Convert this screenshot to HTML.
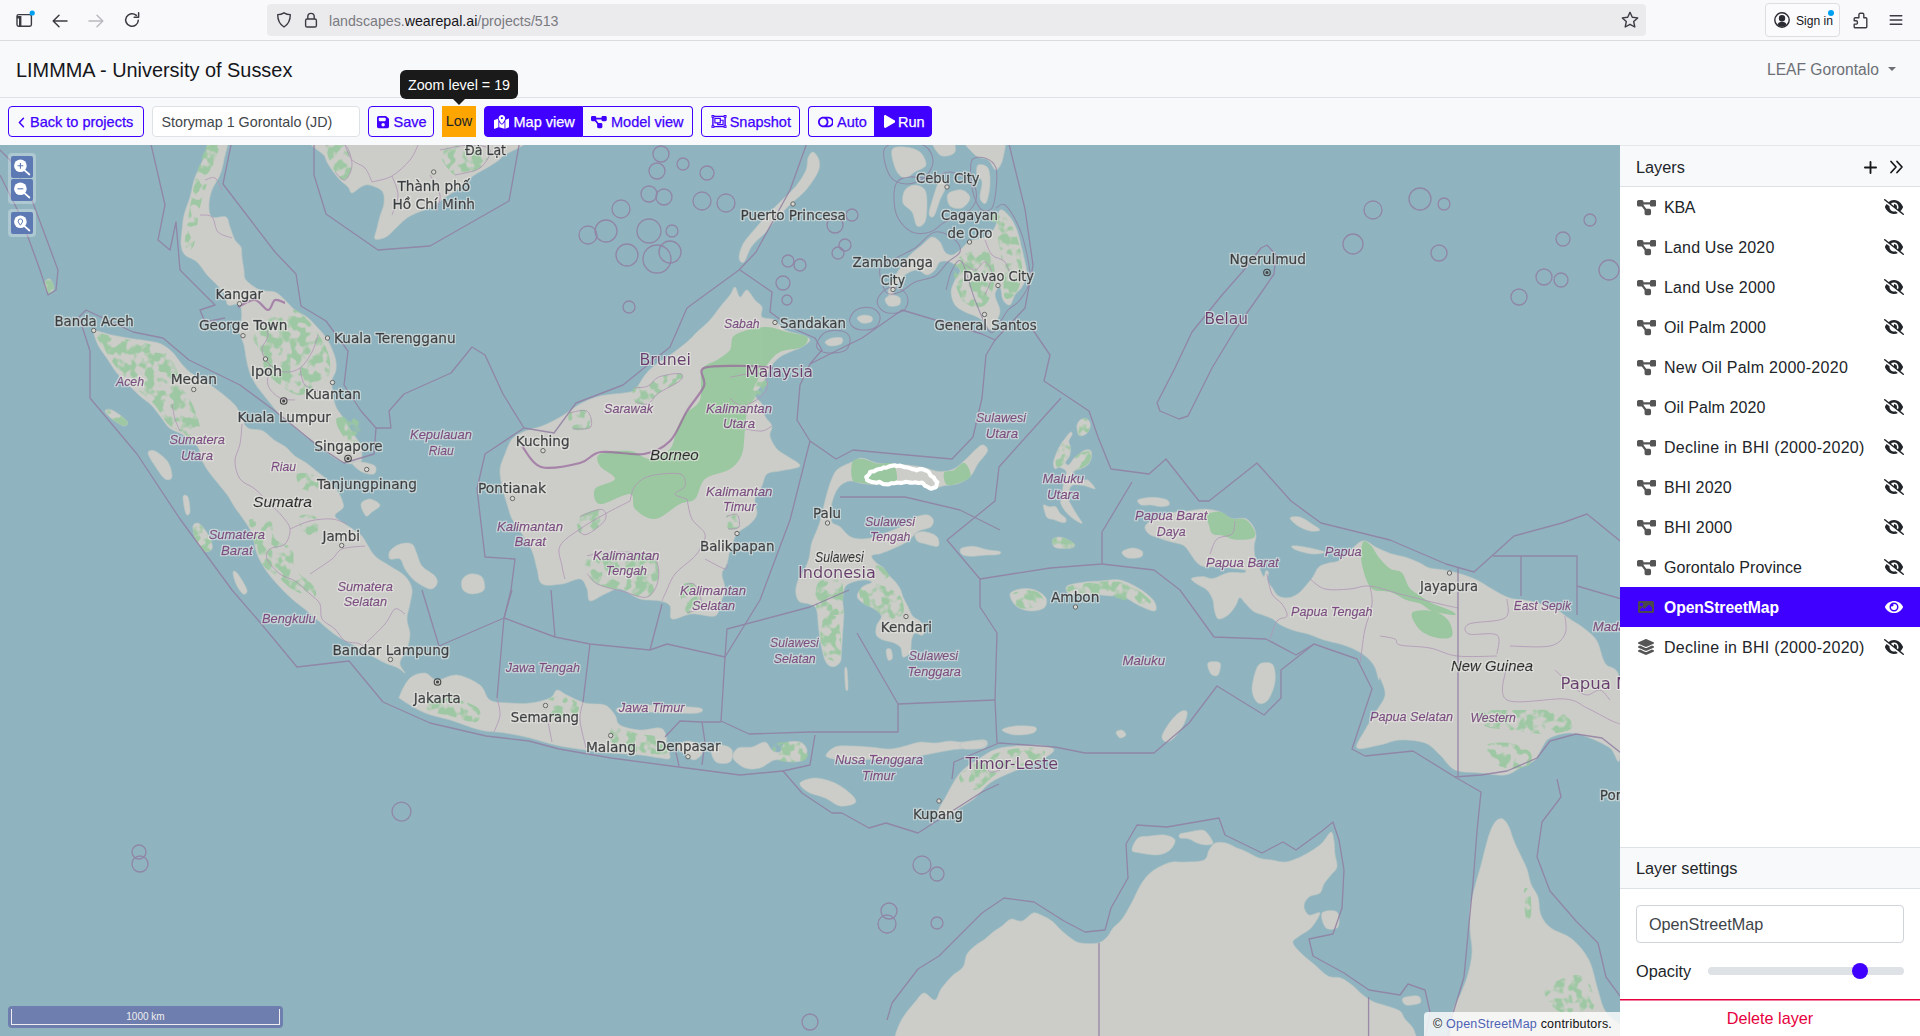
<!DOCTYPE html>
<html lang="en">
<head>
<meta charset="utf-8">
<title>LIMMMA - University of Sussex</title>
<style>
*{box-sizing:border-box}
html,body{margin:0;padding:0}
body{width:1920px;height:1036px;overflow:hidden;background:#f8f9fa;font-family:"Liberation Sans",sans-serif;color:#212529;position:relative}
.abs{position:absolute}
/* browser chrome */
#chrome{position:absolute;left:0;top:0;width:1920px;height:41px;background:#f9f9fb;border-bottom:1px solid #dcdce0}
#urlbar{position:absolute;left:267px;top:4px;width:1379px;height:32px;border-radius:4px;background:#ebebee}
#url{position:absolute;left:62px;top:9px;font-size:14.2px;line-height:17px;color:#7a7a80;white-space:nowrap}
#url b{font-weight:400;color:#15141a}
#signin{position:absolute;left:1765px;top:3px;width:75px;height:34px;border:1px solid #dedee2;border-radius:4px;background:#fbfbfd}
#signin span{position:absolute;left:30px;top:9px;font-size:12.1px;line-height:16px;color:#15141a;white-space:nowrap}
/* app header */
#hdr{position:absolute;left:0;top:41px;width:1920px;height:57px;background:#f8f9fa;border-bottom:1px solid #dee2e6}
#title{position:absolute;left:16px;top:17px;font-size:19.9px;line-height:24px;color:#15161a;white-space:nowrap}
#team{position:absolute;left:1767px;top:19px;font-size:15.6px;line-height:20px;color:#6c7076;white-space:nowrap}
#caret{position:absolute;left:1888px;top:25.5px;width:0;height:0;border-left:4px solid transparent;border-right:4px solid transparent;border-top:4.5px solid #6c7076}
/* toolbar */
.btn{position:absolute;top:106px;height:31px;border:1px solid #4000ff;border-radius:4px;background:#f8f9fa;color:#4000ff;font-size:14.5px;line-height:29px;white-space:nowrap}
.btn.fill{background:#4000ff;color:#fff}
.btn span{position:absolute;top:0.8px;-webkit-text-stroke:0.25px currentColor}
#pname{position:absolute;left:152px;top:106px;width:208px;height:31px;border:1px solid #dee2e6;border-radius:4px;background:#fff;font-size:14.3px;line-height:29px;padding-left:8.5px;padding-top:0.8px;color:#41464b;white-space:nowrap}
#low{position:absolute;left:442px;top:106px;width:34px;height:31px;background:#ffa500;color:#212529;font-size:14.5px;line-height:30px;text-align:center}
#tip{position:absolute;left:400px;top:70px;width:118px;height:29px;border-radius:6px;background:#1a1a1a;color:#fff;font-size:14.3px;line-height:31px;text-align:center;white-space:nowrap}
#tiparrow{position:absolute;left:453px;top:99px;width:0;height:0;border-left:6px solid transparent;border-right:6px solid transparent;border-top:6px solid #1a1a1a}
/* map */
#map{position:absolute;left:0;top:145px;width:1620px;height:891px;overflow:hidden;background:#8fb4bf}
#map svg{position:absolute;left:0;top:0}
.ctl{position:absolute;left:8px;width:28px;border-radius:4px;background:rgba(255,255,255,.27);padding:3px}
.ctl i{display:block;width:22px;height:22px;background:#5d79b3;border-radius:2px;margin-bottom:1px;position:relative}
#scale{position:absolute;left:8px;top:861px;width:275px;height:22px;border-radius:4px;background:#6e7eae;padding:3px}
#scale div{width:269px;height:16px;border:1px solid #eee;border-top:none;color:#eee;font-size:10px;line-height:15px;text-align:center}
#attr{position:absolute;left:1424px;top:867px;width:196px;height:24px;border-top-left-radius:4px;background:rgba(255,255,255,.8);font-size:12.5px;letter-spacing:0.2px;line-height:25px;padding-left:9px;color:#111;white-space:nowrap}
#attr a{color:#4d62b5;text-decoration:none}
/* sidebar */
#side{position:absolute;left:1620px;top:145px;width:300px;height:891px;background:#fff}
#lh{position:absolute;left:0;top:0;width:300px;height:42px;background:#f8f9fa;border-bottom:1px solid #dee2e6;border-top:1px solid #e4e7ea}
#sh span{top:10px !important}
#lh span,#sh span{position:absolute;left:16px;top:11px;font-size:16.3px;line-height:20px;color:#212529}
.row{position:absolute;left:0;width:300px;height:40px;font-size:16px;line-height:40px;color:#212529;white-space:nowrap}
.row span{position:absolute;left:44px;top:1px;letter-spacing:0.27px}
.row.sel{background:#4000ff;color:#fff;font-weight:700}
.row.sel span{font-size:15.7px}
.row svg{position:absolute}
#sh{position:absolute;left:0;top:702px;width:300px;height:42px;background:#f8f9fa;border-top:1px solid #dee2e6;border-bottom:1px solid #dee2e6}
#lname{position:absolute;left:16px;top:760px;width:268px;height:38px;border:1px solid #ced4da;border-radius:4px;font-size:16.2px;line-height:36px;padding-left:12px;color:#3d4349}
#oplabel{position:absolute;left:16px;top:816px;font-size:16.3px;line-height:20px}
#track{position:absolute;left:88px;top:822px;width:196px;height:8px;border-radius:4px;background:#dee2e6}
#thumb{position:absolute;left:232px;top:818px;width:16px;height:16px;border-radius:8px;background:#4000ff}
#del{position:absolute;left:0;top:853.600px;width:300px;height:37.400px;box-shadow:inset 0 1.6px 0 #e6003c;color:#e6003c;font-size:16.2px;line-height:39.500px;text-align:center}
</style>
</head>
<body>

<div id="chrome">
<svg class="abs" style="left:14px;top:8px" width="24" height="24" viewBox="0 0 24 24" fill="none" stroke="#3b3b43" stroke-width="1.4"><rect x="3" y="6.6" width="14.4" height="11.6" rx="1.6"/><path d="M3 9.2h3.2v9" stroke-width="2.4" /><circle cx="18.2" cy="5" r="2.6" fill="#00a0f0" stroke="none"/></svg>
<svg class="abs" style="left:50px;top:11px" width="20" height="20" viewBox="0 0 20 20" fill="none" stroke="#3b3b43" stroke-width="1.5" stroke-linecap="round" stroke-linejoin="round"><path d="M17 10H3.5M9 4.2 3.2 10 9 15.8"/></svg>
<svg class="abs" style="left:86px;top:11px" width="20" height="20" viewBox="0 0 20 20" fill="none" stroke="#b9b9bf" stroke-width="1.5" stroke-linecap="round" stroke-linejoin="round"><path d="M3 10h13.5M11 4.2l5.800 5.800L11 15.800"/></svg>
<svg class="abs" style="left:122px;top:10px" width="20" height="20" viewBox="0 0 20 20" fill="none" stroke="#3b3b43" stroke-width="1.5" stroke-linecap="round" stroke-linejoin="round"><path d="M16.3 10.3a6.300 6.300 0 1 1-2-4.900"/><path d="M16.600 2.800v4.400h-4.400" /></svg>
<div id="urlbar">
<svg class="abs" style="left:8px;top:7px" width="18" height="18" viewBox="0 0 18 18" fill="none" stroke="#3b3b43" stroke-width="1.4" stroke-linejoin="round"><path d="M9 1.800c2 1.300 4.200 1.800 6.300 1.800 0 5.400-1.500 9.600-6.300 12.400C4.200 13.200 2.700 9 2.700 3.600c2.100 0 4.300-.5 6.300-1.800z"/></svg>
<svg class="abs" style="left:35px;top:7px" width="18" height="18" viewBox="0 0 18 18" fill="none" stroke="#3b3b43" stroke-width="1.4"><rect x="3.600" y="8" width="10.800" height="8" rx="1.600"/><path d="M5.800 8V5.600a3.200 3.200 0 0 1 6.400 0V8"/></svg>
<div id="url">landscapes.<b>wearepal.ai</b>/projects/513</div>
<svg class="abs" style="left:1353px;top:6px" width="20" height="20" viewBox="0 0 20 20" fill="none" stroke="#3b3b43" stroke-width="1.4" stroke-linejoin="round"><path d="M10 2.300l2.300 5 5.400.6-4 3.700 1.100 5.400L10 14.300 5.200 17l1.100-5.400-4-3.700 5.400-.6z"/></svg>
</div>
<div id="signin"><svg class="abs" style="left:7px;top:7px" width="18" height="18" viewBox="0 0 18 18" fill="none" stroke="#2b2b33" stroke-width="1.400"><circle cx="9" cy="9" r="7.200"/><circle cx="9" cy="7.200" r="2.500" fill="#2b2b33"/><path d="M4.300 13.600c1-2.200 2.700-2.900 4.700-2.900s3.700.7 4.700 2.900c-1.300 1.500-3 2.200-4.700 2.200s-3.400-.7-4.700-2.200z" fill="#2b2b33" stroke="none"/></svg><span>Sign in</span><svg class="abs" style="left:61px;top:5px" width="8" height="8"><circle cx="4" cy="4" r="3" fill="#00a0f0"/></svg></div>
<svg class="abs" style="left:1850px;top:9px" width="22" height="22" viewBox="0 0 22 22" fill="none" stroke="#3b3b43" stroke-width="1.400" stroke-linejoin="round"><path d="M5.2 8.700h3.700V5.600a1.300 1.300 0 0 1 1.300-1.300h2.300a1.300 1.300 0 0 1 1.300 1.300v3.100h2a1 1 0 0 1 1 1v8a1 1 0 0 1-1 1H5.200a1 1 0 0 1-1-1v-2.600h2a1.200 1.200 0 0 0 1.200-1.200v-1a1.200 1.200 0 0 0-1.200-1.200h-2V9.700a1 1 0 0 1 1-1z"/></svg>
<svg class="abs" style="left:1887px;top:12px" width="18" height="16" viewBox="0 0 18 16" fill="none" stroke="#3b3b43" stroke-width="1.400" stroke-linecap="round"><path d="M3.200 3.800h11.600M3.200 8h11.600M3.200 12.200h11.600"/></svg>
</div>
<div id="hdr"><div id="title">LIMMMA - University of Sussex</div><div id="team">LEAF Gorontalo</div><div id="caret"></div></div>
<div class="btn" style="left:8px;width:136px"><svg class="abs" style="left:9px;top:9.5px" width="7" height="11" viewBox="0 0 8 13" fill="none" stroke="#4000ff" stroke-width="1.800" stroke-linecap="round" stroke-linejoin="round"><path d="M6.300 1.500 1.500 6.500l4.800 5"/></svg><span style="left:21px">Back to projects</span></div>
<div id="pname">Storymap 1 Gorontalo (JD)</div>
<div class="btn" style="left:368px;width:66px"><svg class="abs" style="left:8px;top:7.5px" width="12.25" height="14" viewBox="0 0 448 512" fill="#4000ff" ><path d="M64 32C28.7 32 0 60.7 0 96L0 416c0 35.3 28.7 64 64 64l320 0c35.3 0 64-28.7 64-64l0-242.7c0-17-6.7-33.3-18.7-45.3L352 50.7C340 38.7 323.7 32 306.7 32L64 32zm0 96c0-17.7 14.3-32 32-32l192 0c17.7 0 32 14.3 32 32l0 64c0 17.7-14.3 32-32 32L96 224c-17.7 0-32-14.3-32-32l0-64zM224 288a64 64 0 1 1 0 128 64 64 0 1 1 0-128z"></path></svg><span style="left:24.500px">Save</span></div>
<div id="low">Low</div>
<div id="tip">Zoom level = 19</div><div id="tiparrow"></div>
<div class="btn fill" style="left:484px;width:99px;border-radius:4px 0 0 4px"><svg class="abs" style="left:8.5px;top:7.5px" width="15.75" height="14" viewBox="0 0 576 512" fill="#fff" ><path d="M408 120c0 54.6-73.1 151.9-105.2 192c-7.7 9.6-22 9.6-29.6 0C241.1 271.9 168 174.6 168 120C168 53.7 221.7 0 288 0s120 53.7 120 120zm8 80.4c3.5-6.9 6.7-13.8 9.6-20.6c.5-1.2 1-2.5 1.5-3.7l116-46.4C558.9 123.4 576 135 576 152l0 270.8c0 9.8-6 18.6-15.1 22.3L416 503l0-302.6zM137.6 138.3c2.4 14.1 7.2 28.3 12.8 41.5c2.9 6.8 6.1 13.7 9.6 20.6l0 251.4L32.9 502.7C17.1 509 0 497.4 0 480.4L0 209.6c0-9.8 6-18.6 15.1-22.3l122.6-49zM327.8 332c13.9-17.4 35.7-45.7 56.2-77l0 249.3L192 449.4 192 255c20.5 31.3 42.3 59.6 56.2 77c20.5 25.6 59.1 25.6 79.6 0zM288 152a40 40 0 1 0 0-80 40 40 0 1 0 0 80z"></path></svg><span style="left:28.500px">Map view</span></div>
<div class="btn" style="left:583px;width:110px;border-radius:0 4px 4px 0;border-left:none"><svg class="abs" style="left:8px;top:7.5px" width="15.75" height="14" viewBox="0 0 576 512" fill="#4000ff" ><path d="M0 80C0 53.5 21.5 32 48 32l96 0c26.5 0 48 21.5 48 48l0 16 192 0 0-16c0-26.5 21.5-48 48-48l96 0c26.5 0 48 21.5 48 48l0 96c0 26.5-21.5 48-48 48l-96 0c-26.5 0-48-21.5-48-48l0-16-192 0 0 16c0 1.7-.1 3.4-.3 5L272 288l96 0c26.5 0 48 21.5 48 48l0 96c0 26.5-21.5 48-48 48l-96 0c-26.5 0-48-21.5-48-48l0-96c0-1.7 .1-3.4 .3-5L144 224l-96 0c-26.5 0-48-21.5-48-48L0 80z"></path></svg><span style="left:28px">Model view</span></div>
<div class="btn" style="left:701px;width:99px"><svg class="abs" style="left:8.5px;top:7px" width="16.00" height="15" viewBox="0 0 512 512" fill="#4000ff" ><path d="M500 128c6.627 0 12-5.373 12-12V44c0-6.627-5.373-12-12-12h-72c-6.627 0-12 5.373-12 12v12H96V44c0-6.627-5.373-12-12-12H12C5.373 32 0 37.373 0 44v72c0 6.627 5.373 12 12 12h12v256H12c-6.627 0-12 5.373-12 12v72c0 6.627 5.373 12 12 12h72c6.627 0 12-5.373 12-12v-12h320v12c0 6.627 5.373 12 12 12h72c6.627 0 12-5.373 12-12v-72c0-6.627-5.373-12-12-12h-12V128h12zm-52-64h32v32h-32V64zM32 64h32v32H32V64zm32 384H32v-32h32v32zm416 0h-32v-32h32v32zm-40-64h-12c-6.627 0-12 5.373-12 12v12H96v-12c0-6.627-5.373-12-12-12H72V128h12c6.627 0 12-5.373 12-12v-12h320v12c0 6.627 5.373 12 12 12h12v256zm-36-192h-84v-52c0-6.628-5.373-12-12-12H108c-6.627 0-12 5.372-12 12v168c0 6.628 5.373 12 12 12h84v52c0 6.628 5.373 12 12 12h200c6.627 0 12-5.372 12-12V204c0-6.628-5.373-12-12-12zm-268-24h144v112H136V168zm240 176H232v-24h76c6.627 0 12-5.372 12-12v-76h56v112z"></path></svg><span style="left:27.700px">Snapshot</span></div>
<div class="btn" style="left:808px;width:67px;border-radius:4px 0 0 4px;border-right:none"><svg class="abs" style="left:8.5px;top:7.5px" width="15.75" height="14" viewBox="0 0 576 512" fill="#4000ff" ><path d="M384 64H192C85.961 64 0 149.961 0 256s85.961 192 192 192h192c106.039 0 192-85.961 192-192S490.039 64 384 64zM64 256c0-70.741 57.249-128 128-128 70.741 0 128 57.249 128 128 0 70.741-57.249 128-128 128-70.741 0-128-57.249-128-128zm320 128h-48.905c65.217-72.858 65.236-183.12 0-256H384c70.741 0 128 57.249 128 128 0 70.74-57.249 128-128 128z"></path></svg><span style="left:28px">Auto</span></div>
<div class="btn fill" style="left:874px;width:58px;border-radius:0 4px 4px 0"><svg class="abs" style="left:8.5px;top:8px" width="11.38" height="13" viewBox="0 0 448 512" fill="#fff" ><path d="M424.4 214.7L72.4 6.6C43.8-10.3 0 6.1 0 47.9V464c0 37.5 40.7 60.1 72.4 41.3l352-208c31.4-18.5 31.5-64.1 0-82.6z"></path></svg><span style="left:23px">Run</span></div>
<div id="map">
<svg width="1620" height="891" viewBox="0 145 1620 891">
<rect x="0" y="145" width="1620" height="891" fill="#8fb4bf"/>
<g fill="#cccdc8" stroke="#b7c4c2" stroke-width="0.6">
<path d="M210.0 135.0C206.3 137.8 207.7 146.8 206.0 152.0C204.3 157.2 202.0 161.3 200.0 166.0C198.0 170.7 195.7 174.8 194.0 180.0C192.3 185.2 191.7 191.2 190.0 197.0C188.3 202.8 185.3 209.5 184.0 215.0C182.7 220.5 182.5 225.0 182.0 230.0C181.5 235.0 180.5 240.8 181.0 245.0C181.5 249.2 182.3 252.2 185.0 255.0C187.7 257.8 193.3 258.7 197.0 262.0C200.7 265.3 203.7 271.2 207.0 275.0C210.3 278.8 214.0 281.7 217.0 285.0C220.0 288.3 223.2 291.7 225.0 295.0C226.8 298.3 225.6 303.4 228.0 305.0C230.4 306.6 237.0 302.5 239.3 304.5C241.6 306.5 241.6 312.7 241.6 317.1C241.6 321.5 238.9 326.4 239.3 331.0C239.7 335.6 242.8 340.3 243.9 344.9C245.1 349.5 245.2 354.2 246.2 358.8C247.2 363.4 248.1 368.4 249.7 372.7C251.2 376.9 253.4 380.8 255.5 384.3C257.6 387.8 259.7 390.0 262.4 393.5C265.1 397.0 268.6 401.2 271.7 405.1C274.8 409.0 277.9 413.6 281.0 416.7C284.1 419.8 286.3 420.6 290.2 423.7C294.1 426.8 299.5 431.7 304.1 435.2C308.7 438.7 313.4 441.0 318.0 444.5C322.6 448.0 327.3 453.0 331.9 456.1C336.5 459.2 341.2 461.9 345.8 463.0C350.4 464.1 357.0 464.5 359.7 463.0C362.4 461.5 361.9 457.2 362.0 454.0C362.1 450.8 362.0 448.2 360.0 444.0C358.0 439.8 353.0 433.7 350.0 429.0C347.0 424.3 344.5 420.2 342.0 416.0C339.5 411.8 336.7 409.7 335.0 404.0C333.3 398.3 331.8 387.7 332.0 382.0C332.2 376.3 335.5 374.2 336.0 370.0C336.5 365.8 336.5 362.2 335.0 357.0C333.5 351.8 330.0 344.0 327.0 339.0C324.0 334.0 320.3 330.7 317.0 327.0C313.7 323.3 310.7 319.8 307.0 317.0C303.3 314.2 298.7 312.8 295.0 310.0C291.3 307.2 288.3 303.0 285.0 300.0C281.7 297.0 279.2 293.7 275.0 292.0C270.8 290.3 264.8 292.0 260.0 290.0C255.2 288.0 248.7 283.3 246.0 280.0C243.3 276.7 244.7 273.8 244.0 270.0C243.3 266.2 242.5 260.8 242.0 257.0C241.5 253.2 242.2 249.8 241.0 247.0C239.8 244.2 236.8 243.3 235.0 240.0C233.2 236.7 231.5 230.8 230.0 227.0C228.5 223.2 229.0 218.7 226.0 217.0C223.0 215.3 214.8 219.0 212.0 217.0C209.2 215.0 209.0 209.5 209.0 205.0C209.0 200.5 210.2 195.0 212.0 190.0C213.8 185.0 218.0 180.0 220.0 175.0C222.0 170.0 222.7 166.7 224.0 160.0C225.3 153.3 230.3 139.2 228.0 135.0C225.7 130.8 213.7 132.2 210.0 135.0Z"/>
<path d="M93.3 329.8C96.0 330.2 103.7 333.0 109.5 334.4C115.3 335.8 121.8 336.8 128.0 337.9C134.2 338.9 141.2 339.7 146.6 340.7C152.0 341.7 156.2 341.8 160.5 343.7C164.8 345.6 168.6 348.5 172.1 351.8C175.6 355.1 178.2 359.9 181.3 363.4C184.4 366.9 187.1 370.0 190.6 372.7C194.1 375.4 197.9 376.9 202.2 379.6C206.4 382.3 211.8 385.8 216.1 388.9C220.3 392.0 224.2 395.1 227.7 398.2C231.2 401.3 234.6 403.9 236.9 407.4C239.2 410.9 239.7 415.5 241.6 419.0C243.5 422.5 245.0 426.4 248.5 428.3C252.0 430.2 258.1 428.7 262.4 430.6C266.6 432.5 270.1 437.2 274.0 439.9C277.9 442.6 282.1 444.1 285.6 446.8C289.1 449.5 291.4 453.4 294.9 456.1C298.4 458.8 302.6 460.3 306.5 463.0C310.4 465.7 314.1 469.2 318.0 472.3C321.9 475.4 326.1 478.1 329.6 481.6C333.1 485.1 336.6 489.4 338.9 493.2C341.2 497.0 343.0 502.1 343.5 504.7C344.0 507.3 343.4 507.1 342.0 509.0C340.6 510.9 334.5 513.5 335.0 516.0C335.5 518.5 340.8 521.0 345.0 524.0C349.2 527.0 356.3 530.7 360.0 534.0C363.7 537.3 364.5 540.3 367.0 544.0C369.5 547.7 371.2 552.3 375.0 556.0C378.8 559.7 385.0 562.7 390.0 566.0C395.0 569.3 401.3 572.2 405.0 576.0C408.7 579.8 411.2 584.3 412.0 589.0C412.8 593.7 410.8 599.0 410.0 604.0C409.2 609.0 407.0 614.0 407.0 619.0C407.0 624.0 410.0 629.0 410.0 634.0C410.0 639.0 408.7 644.2 407.0 649.0C405.3 653.8 400.3 659.0 400.0 663.0C399.7 667.0 405.3 672.2 405.0 673.0C404.7 673.8 401.3 669.7 398.0 668.0C394.7 666.3 389.3 665.0 385.0 663.0C380.7 661.0 377.0 658.8 372.0 656.0C367.0 653.2 360.8 649.3 355.0 646.0C349.2 642.7 342.5 639.7 337.0 636.0C331.5 632.3 327.0 628.2 322.0 624.0C317.0 619.8 312.0 615.2 307.0 611.0C302.0 606.8 297.0 603.5 292.0 599.0C287.0 594.5 281.5 589.0 277.0 584.0C272.5 579.0 268.3 574.0 265.0 569.0C261.7 564.0 259.2 559.8 257.0 554.0C254.8 548.2 254.2 539.7 252.0 534.0C249.8 528.3 246.8 524.5 243.9 520.0C241.0 515.5 237.3 511.2 234.6 507.1C231.9 503.0 230.4 499.4 227.7 495.5C225.0 491.6 221.5 487.8 218.4 483.9C215.3 480.0 211.8 476.2 209.1 472.3C206.4 468.4 204.1 464.9 202.2 460.7C200.3 456.4 200.7 451.1 197.6 446.8C194.5 442.6 188.3 438.3 183.7 435.2C179.0 432.1 173.6 431.4 169.7 428.3C165.8 425.2 163.6 420.6 160.5 416.7C157.4 412.8 154.7 408.6 151.2 405.1C147.7 401.6 143.5 399.3 139.6 395.8C135.7 392.3 131.8 388.2 128.0 384.3C124.2 380.4 120.0 376.9 116.5 372.7C113.0 368.4 110.3 363.4 107.2 358.8C104.1 354.2 100.2 349.3 97.9 344.9C95.6 340.4 94.1 334.6 93.3 332.1C92.5 329.6 90.6 329.4 93.3 329.8Z"/>
<path d="M323.0 135.0C290.8 138.7 323.5 151.2 325.0 157.0C326.5 162.8 329.5 166.2 332.0 170.0C334.5 173.8 337.3 177.2 340.0 180.0C342.7 182.8 346.0 184.8 348.0 187.0C350.0 189.2 349.8 193.0 352.0 193.0C354.2 193.0 358.2 188.3 361.0 187.0C363.8 185.7 365.5 184.3 369.0 185.0C372.5 185.7 379.5 188.0 382.0 191.0C384.5 194.0 384.3 198.8 384.0 203.0C383.7 207.2 381.2 211.8 380.0 216.0C378.8 220.2 377.8 224.2 377.0 228.0C376.2 231.8 373.5 237.5 375.0 239.0C376.5 240.5 382.5 238.8 386.0 237.0C389.5 235.2 392.5 231.2 396.0 228.0C399.5 224.8 403.2 220.7 407.0 218.0C410.8 215.3 414.8 213.8 419.0 212.0C423.2 210.2 427.5 209.5 432.0 207.0C436.5 204.5 441.2 200.3 446.0 197.0C450.8 193.7 456.5 190.5 461.0 187.0C465.5 183.5 468.2 179.5 473.0 176.0C477.8 172.5 485.2 169.2 490.0 166.0C494.8 162.8 497.3 162.2 502.0 157.0C506.7 151.8 547.8 138.7 518.0 135.0C488.2 131.3 355.2 131.3 323.0 135.0Z"/>
<path d="M813.0 152.0C814.8 152.3 818.2 156.7 819.0 160.0C819.8 163.3 820.2 167.0 818.0 172.0C815.8 177.0 810.2 185.0 806.0 190.0C801.8 195.0 797.7 197.5 793.0 202.0C788.3 206.5 782.5 212.0 778.0 217.0C773.5 222.0 770.3 227.2 766.0 232.0C761.7 236.8 755.7 241.0 752.0 246.0C748.3 251.0 746.2 260.0 744.0 262.0C741.8 264.0 739.2 261.0 739.0 258.0C738.8 255.0 740.5 248.7 743.0 244.0C745.5 239.3 750.0 234.8 754.0 230.0C758.0 225.2 762.3 220.0 767.0 215.0C771.7 210.0 777.2 204.8 782.0 200.0C786.8 195.2 792.0 191.0 796.0 186.0C800.0 181.0 804.0 174.7 806.0 170.0C808.0 165.3 806.8 161.0 808.0 158.0C809.2 155.0 811.2 151.7 813.0 152.0Z"/>
<path d="M580.0 404.0C586.3 400.7 591.7 398.0 600.0 396.0C608.3 394.0 623.8 393.5 630.0 392.0C636.2 390.5 634.5 389.8 637.0 387.0C639.5 384.2 642.0 378.7 645.0 375.0C648.0 371.3 650.8 368.3 655.0 365.0C659.2 361.7 664.7 358.8 670.0 355.0C675.3 351.2 682.5 345.8 687.0 342.0C691.5 338.2 693.2 335.7 697.0 332.0C700.8 328.3 706.2 324.2 710.0 320.0C713.8 315.8 716.7 311.2 720.0 307.0C723.3 302.8 727.5 298.3 730.0 295.0C732.5 291.7 733.3 286.7 735.0 287.0C736.7 287.3 738.0 296.5 740.0 297.0C742.0 297.5 744.5 289.5 747.0 290.0C749.5 290.5 752.5 297.2 755.0 300.0C757.5 302.8 760.8 304.2 762.0 307.0C763.2 309.8 759.8 314.8 762.0 317.0C764.2 319.2 771.2 317.8 775.0 320.0C778.8 322.2 780.5 327.5 785.0 330.0C789.5 332.5 797.8 333.3 802.0 335.0C806.2 336.7 810.0 338.0 810.0 340.0C810.0 342.0 805.3 345.0 802.0 347.0C798.7 349.0 793.7 350.3 790.0 352.0C786.3 353.7 783.0 354.8 780.0 357.0C777.0 359.2 774.2 362.0 772.0 365.0C769.8 368.0 768.7 371.7 767.0 375.0C765.3 378.3 764.0 381.7 762.0 385.0C760.0 388.3 755.0 391.8 755.0 395.0C755.0 398.2 760.3 400.5 762.0 404.0C763.7 407.5 763.3 412.3 765.0 416.0C766.7 419.7 771.2 422.7 772.0 426.0C772.8 429.3 769.2 432.2 770.0 436.0C770.8 439.8 774.2 445.7 777.0 449.0C779.8 452.3 783.2 453.2 787.0 456.0C790.8 458.8 801.2 463.5 800.0 466.0C798.8 468.5 785.5 469.7 780.0 471.0C774.5 472.3 770.0 471.5 767.0 474.0C764.0 476.5 764.0 481.8 762.0 486.0C760.0 490.2 755.8 494.3 755.0 499.0C754.2 503.7 757.8 509.8 757.0 514.0C756.2 518.2 753.3 520.7 750.0 524.0C746.7 527.3 740.3 529.5 737.0 534.0C733.7 538.5 731.7 546.0 730.0 551.0C728.3 556.0 728.3 560.2 727.0 564.0C725.7 567.8 722.3 569.8 722.0 574.0C721.7 578.2 725.3 584.0 725.0 589.0C724.7 594.0 721.7 599.5 720.0 604.0C718.3 608.5 719.7 614.3 715.0 616.0C710.3 617.7 699.2 613.5 692.0 614.0C684.8 614.5 675.7 620.3 672.0 619.0C668.3 617.7 672.0 609.0 670.0 606.0C668.0 603.0 665.0 602.2 660.0 601.0C655.0 599.8 646.7 601.0 640.0 599.0C633.3 597.0 625.8 589.8 620.0 589.0C614.2 588.2 610.0 592.0 605.0 594.0C600.0 596.0 593.0 601.8 590.0 601.0C587.0 600.2 588.7 592.7 587.0 589.0C585.3 585.3 584.2 579.8 580.0 579.0C575.8 578.2 568.3 583.2 562.0 584.0C555.7 584.8 546.2 586.5 542.0 584.0C537.8 581.5 538.7 574.5 537.0 569.0C535.3 563.5 534.5 556.8 532.0 551.0C529.5 545.2 525.3 539.3 522.0 534.0C518.7 528.7 514.5 524.0 512.0 519.0C509.5 514.0 508.7 509.5 507.0 504.0C505.3 498.5 503.2 491.8 502.0 486.0C500.8 480.2 499.5 474.3 500.0 469.0C500.5 463.7 503.0 459.0 505.0 454.0C507.0 449.0 508.7 442.8 512.0 439.0C515.3 435.2 520.0 433.2 525.0 431.0C530.0 428.8 535.8 428.5 542.0 426.0C548.2 423.5 555.7 419.7 562.0 416.0C568.3 412.3 573.7 407.3 580.0 404.0Z"/>
<path d="M837.9 469.0C841.3 466.2 848.4 463.5 852.4 461.7C856.4 459.9 858.0 457.9 862.0 458.1C866.0 458.3 871.3 461.9 876.5 462.9C881.7 463.9 887.8 463.7 893.4 464.1C899.0 464.5 905.1 464.7 910.3 465.3C915.5 465.9 920.0 466.7 924.8 467.7C929.6 468.7 934.4 471.2 939.2 471.4C944.0 471.6 949.3 471.0 953.7 469.0C958.1 467.0 962.2 462.5 965.8 459.3C969.4 456.1 972.6 452.1 975.4 449.7C978.2 447.3 980.7 444.6 982.7 444.8C984.7 445.0 988.3 447.7 987.5 450.9C986.7 454.1 980.6 459.9 977.8 464.1C975.0 468.3 973.8 473.0 970.6 476.2C967.4 479.4 962.9 481.8 958.5 483.4C954.1 485.0 948.1 485.0 944.1 485.8C940.1 486.6 937.6 488.3 934.4 488.3C931.2 488.3 928.8 486.6 924.8 485.8C920.8 485.0 915.5 483.6 910.3 483.4C905.1 483.2 899.0 484.4 893.4 484.6C887.8 484.8 881.7 484.8 876.5 484.6C871.3 484.4 866.4 484.0 862.0 483.4C857.6 482.8 853.6 480.6 850.0 481.0C846.4 481.4 842.9 483.4 840.3 485.8C837.7 488.2 835.9 491.5 834.3 495.5C832.7 499.5 831.1 505.6 830.7 510.0C830.3 514.4 830.3 519.2 831.9 522.0C833.5 524.8 837.3 524.5 840.3 526.9C843.3 529.3 846.4 534.5 850.0 536.5C853.6 538.5 857.6 538.9 862.0 538.9C866.4 538.9 872.1 537.7 876.5 536.5C880.9 535.3 883.8 533.7 888.6 531.7C893.4 529.7 901.1 526.8 905.5 524.4C909.9 522.0 911.5 518.8 915.1 517.2C918.7 515.6 924.2 514.4 927.2 514.8C930.2 515.2 932.6 517.6 933.2 519.6C933.8 521.6 933.4 524.9 930.8 526.9C928.2 528.9 921.3 529.3 917.5 531.7C913.7 534.1 911.9 538.5 907.9 541.3C903.9 544.1 897.8 546.6 893.4 548.6C889.0 550.6 884.9 552.2 881.3 553.4C877.7 554.6 872.5 554.2 871.7 555.8C870.9 557.4 874.5 561.0 876.5 563.0C878.5 565.0 881.7 565.9 883.7 567.9C885.7 569.9 886.6 572.7 888.6 575.1C890.6 577.5 893.8 579.9 895.8 582.3C897.8 584.7 899.4 587.2 900.6 589.6C901.8 592.0 901.8 594.0 903.0 596.8C904.2 599.6 906.3 603.3 907.9 606.5C909.5 609.7 910.7 613.7 912.7 616.1C914.7 618.5 917.9 618.9 919.9 620.9C921.9 622.9 924.4 625.8 924.8 628.2C925.2 630.6 923.9 634.6 922.3 635.4C920.7 636.2 916.9 632.2 915.1 633.0C913.3 633.8 912.3 637.0 911.5 640.2C910.7 643.4 911.7 649.5 910.3 652.3C908.9 655.1 904.6 657.9 903.0 657.1C901.4 656.3 902.2 649.9 900.6 647.5C899.0 645.1 896.2 643.9 893.4 642.7C890.6 641.5 886.5 641.4 883.7 640.2C880.9 639.0 877.7 637.8 876.5 635.4C875.3 633.0 875.7 629.0 876.5 625.8C877.3 622.6 881.7 618.9 881.3 616.1C880.9 613.3 876.9 610.9 874.1 608.9C871.3 606.9 867.2 606.1 864.4 604.1C861.6 602.1 857.6 599.6 857.2 596.8C856.8 594.0 859.6 589.6 862.0 587.2C864.4 584.8 871.3 583.5 871.7 582.3C872.1 581.1 867.6 579.9 864.4 579.9C861.2 579.9 855.6 581.1 852.4 582.3C849.2 583.5 846.7 584.4 845.1 587.2C843.5 590.0 842.9 594.8 842.7 599.2C842.5 603.6 843.9 608.1 843.9 613.7C843.9 619.3 843.1 626.6 842.7 633.0C842.3 639.4 841.9 647.5 841.5 652.3C841.1 657.1 841.7 659.6 840.3 662.0C838.9 664.4 835.5 666.8 833.1 666.8C830.7 666.8 827.8 665.6 825.8 662.0C823.8 658.4 822.2 650.7 821.0 645.1C819.8 639.5 819.4 634.2 818.6 628.2C817.8 622.2 817.8 612.9 816.2 608.9C814.6 604.9 811.8 605.3 809.0 604.1C806.2 602.9 801.5 603.6 799.3 601.6C797.1 599.6 795.9 595.6 795.7 592.0C795.5 588.4 796.7 583.5 798.1 579.9C799.5 576.3 802.3 573.9 804.1 570.3C805.9 566.7 807.8 562.6 809.0 558.2C810.2 553.8 810.2 548.1 811.4 543.7C812.6 539.3 814.8 535.3 816.2 531.7C817.6 528.1 818.6 526.0 819.8 522.0C821.0 518.0 822.2 512.4 823.4 507.6C824.6 502.8 825.6 497.9 827.0 493.1C828.4 488.3 830.1 482.6 831.9 478.6C833.7 474.6 834.5 471.8 837.9 469.0Z"/>
<path d="M970.0 241.0C974.2 238.8 980.8 239.3 985.0 237.0C989.2 234.7 992.5 231.5 995.0 227.0C997.5 222.5 997.5 211.7 1000.0 210.0C1002.5 208.3 1007.2 213.7 1010.0 217.0C1012.8 220.3 1015.2 225.3 1017.0 230.0C1018.8 234.7 1019.7 239.7 1021.0 245.0C1022.3 250.3 1024.0 257.0 1025.0 262.0C1026.0 267.0 1027.5 270.8 1027.0 275.0C1026.5 279.2 1024.0 283.7 1022.0 287.0C1020.0 290.3 1017.0 292.0 1015.0 295.0C1013.0 298.0 1012.0 304.2 1010.0 305.0C1008.0 305.8 1004.7 303.0 1003.0 300.0C1001.3 297.0 1001.3 287.8 1000.0 287.0C998.7 286.2 995.0 291.2 995.0 295.0C995.0 298.8 999.7 305.8 1000.0 310.0C1000.3 314.2 998.7 316.7 997.0 320.0C995.3 323.3 992.2 329.7 990.0 330.0C987.8 330.3 986.2 324.2 984.0 322.0C981.8 319.8 980.2 318.7 977.0 317.0C973.8 315.3 968.7 314.0 965.0 312.0C961.3 310.0 957.3 308.3 955.0 305.0C952.7 301.7 951.0 296.2 951.0 292.0C951.0 287.8 953.5 283.7 955.0 280.0C956.5 276.3 960.8 273.0 960.0 270.0C959.2 267.0 953.3 263.3 950.0 262.0C946.7 260.7 942.5 260.7 940.0 262.0C937.5 263.3 937.2 267.8 935.0 270.0C932.8 272.2 930.0 275.0 927.0 275.0C924.0 275.0 920.7 270.0 917.0 270.0C913.3 270.0 908.3 272.5 905.0 275.0C901.7 277.5 899.2 281.3 897.0 285.0C894.8 288.7 893.5 295.8 892.0 297.0C890.5 298.2 887.8 294.8 888.0 292.0C888.2 289.2 891.0 284.0 893.0 280.0C895.0 276.0 897.2 272.2 900.0 268.0C902.8 263.8 906.3 258.8 910.0 255.0C913.7 251.2 918.3 248.0 922.0 245.0C925.7 242.0 929.0 237.5 932.0 237.0C935.0 236.5 937.8 239.5 940.0 242.0C942.2 244.5 943.0 249.8 945.0 252.0C947.0 254.2 949.5 255.3 952.0 255.0C954.5 254.7 957.0 252.3 960.0 250.0C963.0 247.7 965.8 243.2 970.0 241.0Z"/>
<path d="M905.0 190.0C907.0 187.0 911.7 185.0 915.0 185.0C918.3 185.0 923.0 186.7 925.0 190.0C927.0 193.3 927.0 199.7 927.0 205.0C927.0 210.3 926.7 218.5 925.0 222.0C923.3 225.5 919.2 227.7 917.0 226.0C914.8 224.3 914.3 215.8 912.0 212.0C909.7 208.2 904.2 206.7 903.0 203.0C901.8 199.3 903.0 193.0 905.0 190.0Z"/>
<path d="M940.0 180.0C942.2 178.0 946.0 182.7 946.0 186.0C946.0 189.3 942.0 195.0 940.0 200.0C938.0 205.0 935.8 213.7 934.0 216.0C932.2 218.3 929.2 217.0 929.0 214.0C928.8 211.0 931.2 203.7 933.0 198.0C934.8 192.3 937.8 182.0 940.0 180.0Z"/>
<path d="M948.0 194.0C950.0 191.3 958.3 189.3 962.0 190.0C965.7 190.7 970.0 195.0 970.0 198.0C970.0 201.0 965.3 206.7 962.0 208.0C958.7 209.3 952.3 208.3 950.0 206.0C947.7 203.7 946.0 196.7 948.0 194.0Z"/>
<path d="M978.0 165.0C979.8 163.8 986.0 164.7 988.0 168.0C990.0 171.3 990.3 179.2 990.0 185.0C989.7 190.8 987.7 200.8 986.0 203.0C984.3 205.2 980.7 201.5 980.0 198.0C979.3 194.5 982.5 185.8 982.0 182.0C981.5 178.2 977.7 177.8 977.0 175.0C976.3 172.2 976.2 166.2 978.0 165.0Z"/>
<path d="M962.0 135.0C966.5 131.7 995.2 131.2 1002.0 135.0C1008.8 138.8 1004.0 152.2 1003.0 158.0C1002.0 163.8 998.5 169.7 996.0 170.0C993.5 170.3 991.5 162.5 988.0 160.0C984.5 157.5 979.3 159.2 975.0 155.0C970.7 150.8 957.5 138.3 962.0 135.0Z"/>
<path d="M892.0 150.0C893.5 146.2 900.3 146.7 905.0 147.0C909.7 147.3 916.5 149.0 920.0 152.0C923.5 155.0 926.8 161.7 926.0 165.0C925.2 168.3 918.5 169.8 915.0 172.0C911.5 174.2 908.2 178.3 905.0 178.0C901.8 177.7 898.2 174.7 896.0 170.0C893.8 165.3 890.5 153.8 892.0 150.0Z"/>
<path d="M930.0 135.0C931.7 131.7 945.8 132.2 950.0 135.0C954.2 137.8 956.7 148.7 955.0 152.0C953.3 155.3 944.2 157.8 940.0 155.0C935.8 152.2 928.3 138.3 930.0 135.0Z"/>
<path d="M1070.6 432.0C1071.7 431.5 1072.5 433.0 1072.2 434.5C1071.9 436.0 1069.2 438.8 1068.9 441.0C1068.6 443.2 1070.5 445.1 1070.6 447.6C1070.7 450.1 1070.5 453.3 1069.7 455.8C1068.9 458.3 1065.7 460.9 1065.6 462.4C1065.5 463.9 1067.5 465.5 1068.9 464.8C1070.3 464.1 1072.2 460.1 1073.8 458.3C1075.4 456.5 1076.9 455.6 1078.8 454.2C1080.7 452.8 1083.2 450.6 1085.3 450.0C1087.3 449.4 1090.1 449.4 1091.1 450.9C1092.1 452.4 1091.8 456.7 1091.1 459.1C1090.4 461.6 1088.8 464.0 1087.0 465.6C1085.2 467.2 1082.6 467.9 1080.4 468.9C1078.2 469.9 1075.2 469.8 1073.8 471.4C1072.4 473.0 1070.8 477.3 1072.2 478.8C1073.6 480.3 1079.3 480.1 1082.0 480.4C1084.7 480.7 1086.4 479.0 1088.6 480.4C1090.8 481.8 1095.2 487.5 1095.2 488.6C1095.2 489.7 1090.8 487.6 1088.6 487.0C1086.4 486.4 1084.7 485.6 1082.0 485.3C1079.3 485.0 1074.4 484.2 1072.2 485.3C1070.0 486.4 1069.5 489.4 1068.9 491.9C1068.4 494.4 1068.4 497.6 1068.9 500.1C1069.5 502.6 1070.8 504.2 1072.2 506.7C1073.6 509.2 1075.5 512.3 1077.1 514.9C1078.7 517.5 1081.5 520.9 1082.0 522.3C1082.5 523.7 1082.0 523.8 1080.4 523.1C1078.8 522.4 1074.7 520.0 1072.2 518.1C1069.7 516.2 1067.5 514.1 1065.6 511.6C1063.7 509.2 1061.4 505.6 1060.7 503.4C1060.0 501.2 1061.1 501.5 1061.5 498.5C1061.9 495.5 1062.5 488.9 1063.2 485.3C1063.9 481.7 1065.2 479.6 1065.6 477.1C1066.0 474.7 1066.7 472.2 1065.6 470.6C1064.5 469.0 1060.9 467.6 1059.1 467.3C1057.3 467.0 1056.0 469.7 1055.0 468.9C1054.0 468.1 1053.0 465.1 1053.3 462.4C1053.6 459.7 1055.4 455.5 1056.6 452.5C1057.8 449.5 1059.2 446.8 1060.7 444.3C1062.2 441.8 1063.9 439.8 1065.6 437.7C1067.2 435.6 1069.5 432.5 1070.6 432.0Z"/>
<path d="M1077.1 424.6C1077.6 423.0 1078.8 420.6 1080.4 419.7C1082.1 418.8 1085.3 418.2 1087.0 418.9C1088.7 419.6 1090.0 421.8 1090.3 423.8C1090.6 425.9 1089.7 429.3 1088.6 431.2C1087.5 433.1 1085.3 434.6 1083.7 435.3C1082.1 436.0 1079.9 436.3 1078.8 435.3C1077.7 434.3 1077.4 431.3 1077.1 429.5C1076.8 427.7 1076.5 426.2 1077.1 424.6Z"/>
<path d="M1043.5 505.0C1044.2 503.9 1047.2 506.4 1049.2 506.7C1051.2 507.0 1054.0 505.6 1055.8 506.7C1057.6 507.8 1058.3 511.3 1059.9 513.2C1061.5 515.1 1064.6 516.6 1065.6 518.1C1066.5 519.6 1066.4 521.6 1065.6 522.3C1064.8 523.0 1062.6 522.7 1060.7 522.3C1058.8 521.9 1056.4 520.5 1054.2 519.8C1052.0 519.1 1049.1 519.2 1047.6 518.1C1046.1 517.0 1045.8 515.4 1045.1 513.2C1044.4 511.0 1042.8 506.1 1043.5 505.0Z"/>
<path d="M1010.0 594.0C1010.7 591.2 1015.8 589.7 1020.0 589.0C1024.2 588.3 1030.7 588.5 1035.0 590.0C1039.3 591.5 1044.5 595.0 1046.0 598.0C1047.5 601.0 1046.7 605.8 1044.0 608.0C1041.3 610.2 1034.7 611.3 1030.0 611.0C1025.3 610.7 1019.3 608.8 1016.0 606.0C1012.7 603.2 1009.3 596.8 1010.0 594.0Z"/>
<path d="M1067.0 586.0C1069.5 584.0 1079.5 582.8 1085.0 582.0C1090.5 581.2 1094.2 581.3 1100.0 581.0C1105.8 580.7 1113.3 578.7 1120.0 580.0C1126.7 581.3 1134.3 585.5 1140.0 589.0C1145.7 592.5 1151.5 597.3 1154.0 601.0C1156.5 604.7 1157.3 610.2 1155.0 611.0C1152.7 611.8 1145.5 608.5 1140.0 606.0C1134.5 603.5 1127.0 597.7 1122.0 596.0C1117.0 594.3 1115.3 596.3 1110.0 596.0C1104.7 595.7 1096.7 594.3 1090.0 594.0C1083.3 593.7 1073.8 595.3 1070.0 594.0C1066.2 592.7 1064.5 588.0 1067.0 586.0Z"/>
<path d="M1122.0 552.0C1122.7 550.3 1128.7 548.2 1132.0 548.0C1135.3 547.8 1140.5 549.5 1142.0 551.0C1143.5 552.5 1143.3 555.8 1141.0 557.0C1138.7 558.2 1131.2 558.8 1128.0 558.0C1124.8 557.2 1121.3 553.7 1122.0 552.0Z"/>
<path d="M1137.8 500.1C1138.9 498.9 1144.4 498.0 1147.7 497.6C1151.0 497.2 1154.2 497.2 1157.5 497.6C1160.8 498.0 1165.5 498.9 1167.4 500.1C1169.3 501.3 1170.1 503.9 1169.0 505.0C1167.9 506.1 1163.8 506.7 1160.8 506.7C1157.8 506.7 1154.3 505.3 1151.0 505.0C1147.7 504.7 1143.3 505.8 1141.1 505.0C1138.9 504.2 1136.7 501.3 1137.8 500.1Z"/>
<path d="M1145.1 526.3C1146.0 523.7 1150.5 520.9 1154.7 518.6C1158.9 516.4 1164.7 514.1 1170.2 512.8C1175.7 511.5 1181.8 511.5 1187.6 510.9C1193.4 510.3 1199.4 508.8 1204.9 509.0C1210.4 509.2 1215.9 510.3 1220.4 511.9C1224.9 513.5 1227.8 517.5 1232.0 518.6C1236.2 519.7 1242.0 517.3 1245.5 518.6C1249.0 519.9 1251.4 523.4 1253.2 526.3C1255.0 529.2 1255.9 532.8 1256.1 536.0C1256.3 539.2 1254.4 542.1 1254.2 545.6C1254.0 549.1 1254.3 553.7 1255.1 557.2C1255.9 560.8 1257.5 563.7 1259.0 566.9C1260.5 570.1 1262.7 575.9 1263.8 576.5C1264.9 577.1 1265.0 571.3 1265.8 570.7C1266.6 570.1 1268.3 571.1 1268.6 572.7C1268.9 574.3 1267.0 577.8 1267.7 580.4C1268.4 583.0 1270.7 585.5 1272.5 588.1C1274.3 590.7 1275.7 594.2 1278.3 595.8C1280.9 597.4 1284.8 598.1 1288.0 597.8C1291.2 597.5 1294.7 595.8 1297.6 593.9C1300.5 592.0 1302.7 589.1 1305.3 586.2C1307.9 583.3 1310.8 579.7 1313.1 576.5C1315.3 573.3 1316.2 569.1 1318.8 566.9C1321.4 564.6 1325.3 564.0 1328.5 563.0C1331.7 562.0 1334.9 562.7 1338.1 561.1C1341.3 559.5 1344.6 556.3 1347.8 553.4C1351.0 550.5 1354.6 545.8 1357.5 543.7C1360.4 541.6 1362.0 540.1 1365.2 540.8C1368.4 541.4 1372.6 545.5 1376.8 547.6C1381.0 549.7 1385.5 551.8 1390.3 553.4C1395.1 555.0 1400.8 555.6 1405.7 557.2C1410.7 558.8 1416.0 561.2 1420.0 563.0C1424.0 564.8 1425.0 566.7 1430.0 568.0C1435.0 569.3 1442.5 569.2 1450.0 571.0C1457.5 572.8 1468.0 576.0 1475.0 579.0C1482.0 582.0 1486.2 585.8 1492.0 589.0C1497.8 592.2 1503.7 596.0 1510.0 598.0C1516.3 600.0 1522.5 599.2 1530.0 601.0C1537.5 602.8 1548.3 606.0 1555.0 609.0C1561.7 612.0 1565.0 615.7 1570.0 619.0C1575.0 622.3 1580.5 625.3 1585.0 629.0C1589.5 632.7 1593.7 635.3 1597.0 641.0C1600.3 646.7 1601.2 656.5 1605.0 663.0C1608.8 669.5 1617.5 664.2 1620.0 680.0C1622.5 695.8 1621.7 746.7 1620.0 758.0C1618.3 769.3 1615.0 751.3 1610.0 748.0C1605.0 744.7 1596.7 740.5 1590.0 738.0C1583.3 735.5 1576.7 733.0 1570.0 733.0C1563.3 733.0 1554.7 735.5 1550.0 738.0C1545.3 740.5 1544.5 744.3 1542.0 748.0C1539.5 751.7 1538.7 756.7 1535.0 760.0C1531.3 763.3 1525.0 765.5 1520.0 768.0C1515.0 770.5 1511.7 774.2 1505.0 775.0C1498.3 775.8 1488.3 773.8 1480.0 773.0C1471.7 772.2 1461.7 773.0 1455.0 770.0C1448.3 767.0 1445.0 759.5 1440.0 755.0C1435.0 750.5 1431.7 745.5 1425.0 743.0C1418.3 740.5 1407.5 739.7 1400.0 740.0C1392.5 740.3 1387.2 743.7 1380.0 745.0C1372.8 746.3 1359.5 750.5 1357.0 748.0C1354.5 745.5 1362.0 735.8 1365.0 730.0C1368.0 724.2 1371.7 718.8 1375.0 713.0C1378.3 707.2 1384.2 700.8 1385.0 695.0C1385.8 689.2 1381.0 680.5 1380.0 678.0C1379.0 675.5 1379.6 681.8 1378.7 680.0C1377.8 678.2 1376.7 671.0 1374.8 667.3C1372.9 663.6 1370.3 660.5 1367.1 657.6C1363.9 654.7 1360.0 652.1 1355.5 649.9C1351.0 647.6 1345.2 645.7 1340.1 644.1C1334.9 642.5 1329.8 641.8 1324.6 640.2C1319.4 638.6 1314.3 636.0 1309.2 634.4C1304.1 632.8 1298.5 632.2 1293.7 630.6C1288.9 629.0 1283.7 626.7 1280.2 624.8C1276.7 622.9 1275.4 620.6 1272.5 619.0C1269.6 617.4 1266.1 616.4 1262.9 615.1C1259.7 613.8 1256.1 613.2 1253.2 611.3C1250.3 609.4 1247.8 605.9 1245.5 603.6C1243.2 601.4 1241.3 597.5 1239.7 597.8C1238.1 598.1 1237.7 602.6 1235.8 605.5C1233.9 608.4 1231.0 612.9 1228.1 615.1C1225.2 617.4 1220.8 619.6 1218.5 619.0C1216.2 618.4 1215.6 614.5 1214.6 611.3C1213.6 608.1 1214.0 603.2 1212.7 599.7C1211.4 596.2 1209.5 592.6 1206.9 590.0C1204.3 587.4 1199.8 586.1 1197.2 584.2C1194.6 582.3 1190.4 579.8 1191.4 578.5C1192.4 577.2 1199.5 576.5 1203.0 576.5C1206.5 576.5 1208.5 579.1 1212.7 578.5C1216.9 577.9 1222.9 573.7 1228.1 572.7C1233.2 571.7 1241.0 573.2 1243.6 572.7C1246.2 572.2 1247.5 570.8 1243.6 569.8C1239.7 568.8 1226.9 567.4 1220.4 566.9C1214.0 566.4 1208.8 567.5 1204.9 566.9C1201.0 566.2 1199.5 564.9 1197.2 563.0C1195.0 561.1 1193.7 558.2 1191.4 555.3C1189.2 552.4 1187.2 547.9 1183.7 545.6C1180.2 543.4 1174.4 543.1 1170.2 541.8C1166.0 540.5 1162.1 539.2 1158.6 537.9C1155.1 536.6 1151.2 536.0 1149.0 534.1C1146.8 532.2 1144.1 528.9 1145.1 526.3Z"/>
<path d="M1290.0 518.0C1290.3 516.5 1296.3 516.0 1300.0 517.0C1303.7 518.0 1308.7 521.8 1312.0 524.0C1315.3 526.2 1320.3 528.8 1320.0 530.0C1319.7 531.2 1313.7 531.7 1310.0 531.0C1306.3 530.3 1301.3 528.2 1298.0 526.0C1294.7 523.8 1289.7 519.5 1290.0 518.0Z"/>
<path d="M1292.0 546.0C1293.5 545.5 1299.5 546.0 1305.0 547.0C1310.5 548.0 1323.8 550.8 1325.0 552.0C1326.2 553.2 1316.8 554.3 1312.0 554.0C1307.2 553.7 1299.3 551.3 1296.0 550.0C1292.7 548.7 1290.5 546.5 1292.0 546.0Z"/>
<path d="M390.0 551.0C391.7 548.5 396.3 545.2 400.0 544.0C403.7 542.8 409.2 542.3 412.0 544.0C414.8 545.7 415.3 550.3 417.0 554.0C418.7 557.7 419.0 562.3 422.0 566.0C425.0 569.7 432.5 573.0 435.0 576.0C437.5 579.0 437.8 581.8 437.0 584.0C436.2 586.2 433.7 589.5 430.0 589.0C426.3 588.5 419.2 584.3 415.0 581.0C410.8 577.7 407.5 572.7 405.0 569.0C402.5 565.3 402.5 560.7 400.0 559.0C397.5 557.3 391.7 560.3 390.0 559.0C388.3 557.7 388.3 553.5 390.0 551.0Z"/>
<path d="M462.0 580.0C463.2 577.3 466.7 574.5 470.0 574.0C473.3 573.5 479.7 574.3 482.0 577.0C484.3 579.7 485.7 587.2 484.0 590.0C482.3 592.8 475.5 594.0 472.0 594.0C468.5 594.0 464.7 592.3 463.0 590.0C461.3 587.7 460.8 582.7 462.0 580.0Z"/>
<path d="M105.0 411.0C105.0 409.5 108.3 408.3 112.0 410.0C115.7 411.7 125.0 418.3 127.0 421.0C129.0 423.7 126.5 426.3 124.0 426.0C121.5 425.7 115.2 421.5 112.0 419.0C108.8 416.5 105.0 412.5 105.0 411.0Z"/>
<path d="M148.0 453.0C148.0 450.5 151.7 449.5 155.0 451.0C158.3 452.5 165.2 457.7 168.0 462.0C170.8 466.3 172.5 474.2 172.0 477.0C171.5 479.8 167.8 480.8 165.0 479.0C162.2 477.2 157.8 470.3 155.0 466.0C152.2 461.7 148.0 455.5 148.0 453.0Z"/>
<path d="M193.0 526.0C193.7 523.3 197.2 522.0 200.0 524.0C202.8 526.0 208.0 533.8 210.0 538.0C212.0 542.2 213.0 546.8 212.0 549.0C211.0 551.2 206.7 552.5 204.0 551.0C201.3 549.5 197.8 544.2 196.0 540.0C194.2 535.8 192.3 528.7 193.0 526.0Z"/>
<path d="M233.0 572.0C233.3 570.3 235.7 571.0 238.0 574.0C240.3 577.0 246.2 586.7 247.0 590.0C247.8 593.3 244.8 595.0 243.0 594.0C241.2 593.0 237.7 587.7 236.0 584.0C234.3 580.3 232.7 573.7 233.0 572.0Z"/>
<path d="M183.0 497.0C183.3 494.2 186.8 494.5 188.0 497.0C189.2 499.5 190.3 509.2 190.0 512.0C189.7 514.8 187.2 516.5 186.0 514.0C184.8 511.5 182.7 499.8 183.0 497.0Z"/>
<path d="M361.0 504.0C361.7 501.2 366.8 498.8 370.0 499.0C373.2 499.2 379.7 502.8 380.0 505.0C380.3 507.2 374.3 510.2 372.0 512.0C369.7 513.8 367.8 517.3 366.0 516.0C364.2 514.7 360.3 506.8 361.0 504.0Z"/>
<path d="M352.0 463.0C352.0 461.3 358.2 461.5 362.0 462.0C365.8 462.5 373.0 464.0 375.0 466.0C377.0 468.0 376.2 473.0 374.0 474.0C371.8 475.0 365.7 473.8 362.0 472.0C358.3 470.2 352.0 464.7 352.0 463.0Z"/>
<path d="M400.0 695.0C401.3 691.3 405.8 681.7 410.0 678.0C414.2 674.3 420.5 672.7 425.0 673.0C429.5 673.3 431.7 679.7 437.0 680.0C442.3 680.3 449.8 674.2 457.0 675.0C464.2 675.8 474.5 680.8 480.0 685.0C485.5 689.2 485.0 697.0 490.0 700.0C495.0 703.0 503.3 702.5 510.0 703.0C516.7 703.5 523.3 703.8 530.0 703.0C536.7 702.2 545.5 700.2 550.0 698.0C554.5 695.8 554.2 690.5 557.0 690.0C559.8 689.5 562.3 692.8 567.0 695.0C571.7 697.2 578.7 701.3 585.0 703.0C591.3 704.7 600.0 703.0 605.0 705.0C610.0 707.0 612.5 711.7 615.0 715.0C617.5 718.3 615.8 722.5 620.0 725.0C624.2 727.5 633.3 729.5 640.0 730.0C646.7 730.5 655.7 727.2 660.0 728.0C664.3 728.8 664.8 732.2 666.0 735.0C667.2 737.8 666.3 741.2 667.0 745.0C667.7 748.8 671.2 755.8 670.0 758.0C668.8 760.2 665.0 758.5 660.0 758.0C655.0 757.5 648.3 755.8 640.0 755.0C631.7 754.2 619.2 753.8 610.0 753.0C600.8 752.2 594.2 751.3 585.0 750.0C575.8 748.7 564.2 747.0 555.0 745.0C545.8 743.0 538.3 740.0 530.0 738.0C521.7 736.0 513.3 734.3 505.0 733.0C496.7 731.7 489.2 732.2 480.0 730.0C470.8 727.8 459.2 722.8 450.0 720.0C440.8 717.2 433.0 716.3 425.0 713.0C417.0 709.7 406.2 703.0 402.0 700.0C397.8 697.0 398.7 698.7 400.0 695.0Z"/>
<path d="M618.0 708.0C621.3 706.7 631.3 705.3 640.0 705.0C648.7 704.7 660.0 705.5 670.0 706.0C680.0 706.5 695.3 706.8 700.0 708.0C704.7 709.2 703.0 712.2 698.0 713.0C693.0 713.8 679.7 713.2 670.0 713.0C660.3 712.8 648.3 712.0 640.0 712.0C631.7 712.0 623.7 713.7 620.0 713.0C616.3 712.3 614.7 709.3 618.0 708.0Z"/>
<path d="M677.0 747.0C677.3 744.7 684.2 741.2 688.0 741.0C691.8 740.8 697.7 743.8 700.0 746.0C702.3 748.2 703.0 751.7 702.0 754.0C701.0 756.3 696.7 759.8 694.0 760.0C691.3 760.2 688.8 757.2 686.0 755.0C683.2 752.8 676.7 749.3 677.0 747.0Z"/>
<path d="M711.0 748.0C712.0 745.2 718.5 744.7 722.0 745.0C725.5 745.3 730.7 747.2 732.0 750.0C733.3 752.8 732.7 760.0 730.0 762.0C727.3 764.0 719.2 764.3 716.0 762.0C712.8 759.7 710.0 750.8 711.0 748.0Z"/>
<path d="M733.0 758.0C731.8 754.7 734.8 749.8 738.0 748.0C741.2 746.2 747.5 748.0 752.0 747.0C756.5 746.0 761.7 741.5 765.0 742.0C768.3 742.5 769.5 748.3 772.0 750.0C774.5 751.7 777.8 753.2 780.0 752.0C782.2 750.8 781.7 744.7 785.0 743.0C788.3 741.3 796.3 740.8 800.0 742.0C803.7 743.2 806.5 747.0 807.0 750.0C807.5 753.0 805.8 758.0 803.0 760.0C800.2 762.0 794.7 762.0 790.0 762.0C785.3 762.0 780.0 759.0 775.0 760.0C770.0 761.0 765.0 766.7 760.0 768.0C755.0 769.3 749.5 769.7 745.0 768.0C740.5 766.3 734.2 761.3 733.0 758.0Z"/>
<path d="M826.0 756.0C825.2 753.8 831.0 748.7 835.0 747.0C839.0 745.3 844.2 746.0 850.0 746.0C855.8 746.0 863.3 746.5 870.0 747.0C876.7 747.5 884.2 749.2 890.0 749.0C895.8 748.8 900.0 747.2 905.0 746.0C910.0 744.8 915.0 742.5 920.0 742.0C925.0 741.5 930.0 743.2 935.0 743.0C940.0 742.8 945.5 741.2 950.0 741.0C954.5 740.8 956.2 742.2 962.0 742.0C967.8 741.8 981.3 739.0 985.0 740.0C988.7 741.0 988.2 746.5 984.0 748.0C979.8 749.5 967.3 748.3 960.0 749.0C952.7 749.7 946.7 750.8 940.0 752.0C933.3 753.2 926.7 754.7 920.0 756.0C913.3 757.3 906.7 759.5 900.0 760.0C893.3 760.5 886.7 759.0 880.0 759.0C873.3 759.0 866.7 759.8 860.0 760.0C853.3 760.2 845.7 760.7 840.0 760.0C834.3 759.3 826.8 758.2 826.0 756.0Z"/>
<path d="M800.0 783.0C801.2 780.7 809.2 778.0 815.0 778.0C820.8 778.0 828.8 780.2 835.0 783.0C841.2 785.8 848.7 791.7 852.0 795.0C855.3 798.3 857.0 801.2 855.0 803.0C853.0 804.8 845.0 806.8 840.0 806.0C835.0 805.2 830.3 800.3 825.0 798.0C819.7 795.7 812.2 794.5 808.0 792.0C803.8 789.5 798.8 785.3 800.0 783.0Z"/>
<path d="M938.0 812.0C938.0 808.7 941.3 804.5 945.0 798.0C948.7 791.5 954.2 779.7 960.0 773.0C965.8 766.3 973.3 762.2 980.0 758.0C986.7 753.8 990.8 750.2 1000.0 748.0C1009.2 745.8 1026.3 745.0 1035.0 745.0C1043.7 745.0 1049.2 746.7 1052.0 748.0C1054.8 749.3 1054.8 750.5 1052.0 753.0C1049.2 755.5 1042.0 759.7 1035.0 763.0C1028.0 766.3 1017.5 769.7 1010.0 773.0C1002.5 776.3 995.8 778.8 990.0 783.0C984.2 787.2 980.0 793.8 975.0 798.0C970.0 802.2 965.0 804.7 960.0 808.0C955.0 811.3 948.7 817.3 945.0 818.0C941.3 818.7 938.0 815.3 938.0 812.0Z"/>
<path d="M1002.0 730.0C1002.0 728.5 1009.5 726.5 1015.0 726.0C1020.5 725.5 1032.0 725.8 1035.0 727.0C1038.0 728.2 1036.3 731.7 1033.0 733.0C1029.7 734.3 1020.2 735.5 1015.0 735.0C1009.8 734.5 1002.0 731.5 1002.0 730.0Z"/>
<path d="M960.0 744.0C961.2 742.7 967.8 741.3 972.0 741.0C976.2 740.7 983.3 740.8 985.0 742.0C986.7 743.2 985.3 746.8 982.0 748.0C978.7 749.2 968.7 749.7 965.0 749.0C961.3 748.3 958.8 745.3 960.0 744.0Z"/>
<path d="M1162.0 736.0C1162.7 732.7 1167.0 726.0 1170.0 722.0C1173.0 718.0 1177.2 713.7 1180.0 712.0C1182.8 710.3 1186.3 710.0 1187.0 712.0C1187.7 714.0 1186.2 719.7 1184.0 724.0C1181.8 728.3 1177.0 735.0 1174.0 738.0C1171.0 741.0 1168.0 742.3 1166.0 742.0C1164.0 741.7 1161.3 739.3 1162.0 736.0Z"/>
<path d="M1252.0 690.0C1251.7 684.5 1254.3 674.5 1256.0 670.0C1257.7 665.5 1259.2 663.8 1262.0 663.0C1264.8 662.2 1270.8 661.8 1273.0 665.0C1275.2 668.2 1275.8 676.2 1275.0 682.0C1274.2 687.8 1270.8 696.5 1268.0 700.0C1265.2 703.5 1260.7 704.7 1258.0 703.0C1255.3 701.3 1252.3 695.5 1252.0 690.0Z"/>
<path d="M1208.0 663.0C1209.5 661.2 1218.3 661.0 1220.0 663.0C1221.7 665.0 1219.5 673.2 1218.0 675.0C1216.5 676.8 1212.7 676.0 1211.0 674.0C1209.3 672.0 1206.5 664.8 1208.0 663.0Z"/>
<path d="M1116.0 732.0C1116.3 730.7 1120.3 729.5 1122.0 730.0C1123.7 730.5 1126.3 733.7 1126.0 735.0C1125.7 736.3 1121.7 738.5 1120.0 738.0C1118.3 737.5 1115.7 733.3 1116.0 732.0Z"/>
<path d="M1132.0 850.0C1131.7 847.5 1135.0 840.3 1138.0 838.0C1141.0 835.7 1145.5 836.5 1150.0 836.0C1154.5 835.5 1160.8 834.3 1165.0 835.0C1169.2 835.7 1174.2 837.5 1175.0 840.0C1175.8 842.5 1172.8 847.5 1170.0 850.0C1167.2 852.5 1163.0 854.5 1158.0 855.0C1153.0 855.5 1144.3 853.8 1140.0 853.0C1135.7 852.2 1132.3 852.5 1132.0 850.0Z"/>
<path d="M893.0 1050.0C893.8 1046.0 893.5 1041.2 895.0 1036.0C896.5 1030.8 898.7 1024.7 902.0 1019.0C905.3 1013.3 911.3 1006.3 915.0 1002.0C918.7 997.7 920.7 993.3 924.0 993.0C927.3 992.7 932.2 1000.7 935.0 1000.0C937.8 999.3 938.2 993.0 941.0 989.0C943.8 985.0 948.3 979.7 952.0 976.0C955.7 972.3 960.5 970.7 963.0 967.0C965.5 963.3 964.8 957.7 967.0 954.0C969.2 950.3 973.0 947.5 976.0 945.0C979.0 942.5 982.2 941.2 985.0 939.0C987.8 936.8 990.2 934.2 993.0 932.0C995.8 929.8 999.0 928.2 1002.0 926.0C1005.0 923.8 1007.7 919.8 1011.0 919.0C1014.3 918.2 1018.3 922.0 1022.0 921.0C1025.7 920.0 1029.8 914.0 1033.0 913.0C1036.2 912.0 1037.8 913.7 1041.0 915.0C1044.2 916.3 1048.7 918.5 1052.0 921.0C1055.3 923.5 1057.7 927.0 1061.0 930.0C1064.3 933.0 1068.7 936.8 1072.0 939.0C1075.3 941.2 1076.7 942.3 1081.0 943.0C1085.3 943.7 1093.7 944.0 1098.0 943.0C1102.3 942.0 1104.5 939.5 1107.0 937.0C1109.5 934.5 1110.5 931.0 1113.0 928.0C1115.5 925.0 1119.0 923.0 1122.0 919.0C1125.0 915.0 1128.0 909.5 1131.0 904.0C1134.0 898.5 1137.2 890.8 1140.0 886.0C1142.8 881.2 1144.8 878.2 1148.0 875.0C1151.2 871.8 1155.0 869.2 1159.0 867.0C1163.0 864.8 1167.7 862.8 1172.0 862.0C1176.3 861.2 1179.7 862.3 1185.0 862.0C1190.3 861.7 1200.0 862.0 1204.0 860.0C1208.0 858.0 1207.2 852.8 1209.0 850.0C1210.8 847.2 1212.2 844.2 1215.0 843.0C1217.8 841.8 1222.3 842.2 1226.0 843.0C1229.7 843.8 1233.8 846.7 1237.0 848.0C1240.2 849.3 1241.3 849.3 1245.0 851.0C1248.7 852.7 1254.5 856.5 1259.0 858.0C1263.5 859.5 1267.7 859.3 1272.0 860.0C1276.3 860.7 1280.7 862.3 1285.0 862.0C1289.3 861.7 1293.7 859.8 1298.0 858.0C1302.3 856.2 1307.0 853.5 1311.0 851.0C1315.0 848.5 1318.7 846.2 1322.0 843.0C1325.3 839.8 1329.0 832.3 1331.0 832.0C1333.0 831.7 1333.3 837.3 1334.0 841.0C1334.7 844.7 1334.5 849.7 1335.0 854.0C1335.5 858.3 1337.7 863.5 1337.0 867.0C1336.3 870.5 1333.2 872.2 1331.0 875.0C1328.8 877.8 1325.8 881.0 1324.0 884.0C1322.2 887.0 1322.5 890.8 1320.0 893.0C1317.5 895.2 1311.7 894.8 1309.0 897.0C1306.3 899.2 1304.0 903.0 1304.0 906.0C1304.0 909.0 1306.3 913.8 1309.0 915.0C1311.7 916.2 1319.7 910.8 1320.0 913.0C1320.3 915.2 1314.7 924.0 1311.0 928.0C1307.3 932.0 1301.0 934.5 1298.0 937.0C1295.0 939.5 1292.3 940.2 1293.0 943.0C1293.7 945.8 1298.3 950.3 1302.0 954.0C1305.7 957.7 1310.7 961.3 1315.0 965.0C1319.3 968.7 1323.7 973.8 1328.0 976.0C1332.3 978.2 1337.0 976.5 1341.0 978.0C1345.0 979.5 1348.3 982.2 1352.0 985.0C1355.7 987.8 1359.3 992.2 1363.0 995.0C1366.7 997.8 1370.0 1000.2 1374.0 1002.0C1378.0 1003.8 1382.7 1004.5 1387.0 1006.0C1391.3 1007.5 1397.0 1008.8 1400.0 1011.0C1403.0 1013.2 1402.8 1016.2 1405.0 1019.0C1407.2 1021.8 1410.2 1023.7 1413.0 1028.0C1415.8 1032.3 1416.3 1042.2 1422.0 1045.0C1427.7 1047.8 1441.8 1050.7 1447.0 1045.0C1452.2 1039.3 1450.7 1019.7 1453.0 1011.0C1455.3 1002.3 1458.5 999.2 1461.0 993.0C1463.5 986.8 1466.2 980.8 1468.0 974.0C1469.8 967.2 1471.7 959.3 1472.0 952.0C1472.3 944.7 1470.3 937.3 1470.0 930.0C1469.7 922.7 1469.2 915.3 1470.0 908.0C1470.8 900.7 1473.2 893.2 1475.0 886.0C1476.8 878.8 1479.3 871.2 1481.0 865.0C1482.7 858.8 1483.5 854.5 1485.0 849.0C1486.5 843.5 1488.2 836.7 1490.0 832.0C1491.8 827.3 1493.8 823.2 1496.0 821.0C1498.2 818.8 1500.8 818.0 1503.0 819.0C1505.2 820.0 1507.2 823.3 1509.0 827.0C1510.8 830.7 1512.2 836.5 1514.0 841.0C1515.8 845.5 1517.8 849.3 1520.0 854.0C1522.2 858.7 1525.2 864.0 1527.0 869.0C1528.8 874.0 1529.2 879.3 1531.0 884.0C1532.8 888.7 1536.3 891.8 1538.0 897.0C1539.7 902.2 1538.8 909.8 1541.0 915.0C1543.2 920.2 1545.8 924.0 1551.0 928.0C1556.2 932.0 1565.7 933.7 1572.0 939.0C1578.3 944.3 1584.7 951.5 1589.0 960.0C1593.3 968.5 1595.2 981.3 1598.0 990.0C1600.8 998.7 1601.5 1005.3 1606.0 1012.0C1610.5 1018.7 1619.3 1022.0 1625.0 1030.0C1630.7 1038.0 1762.5 1055.0 1640.0 1060.0C1517.5 1065.0 1014.5 1061.7 890.0 1060.0C765.5 1058.3 892.2 1054.0 893.0 1050.0Z"/>
<path d="M915.1 534.1C916.3 532.5 921.2 531.3 924.8 531.7C928.4 532.1 934.6 534.1 936.8 536.5C939.0 538.9 940.0 545.0 938.0 546.2C936.0 547.4 928.2 544.5 924.8 543.7C921.4 542.9 919.1 542.9 917.5 541.3C915.9 539.7 913.9 535.7 915.1 534.1Z"/>
<path d="M886.2 649.9C886.7 648.1 890.0 648.0 891.0 649.4C892.0 650.8 892.9 656.5 892.4 658.3C891.9 660.1 889.1 661.4 888.1 660.0C887.1 658.6 885.7 651.7 886.2 649.9Z"/>
<path d="M844.7 669.2C845.0 666.1 846.6 666.5 847.1 669.7C847.6 672.9 848.2 685.4 848.0 688.5C847.8 691.6 846.1 691.7 845.6 688.5C845.1 685.3 844.5 672.3 844.7 669.2Z"/>
<path d="M960.9 548.6C962.7 547.2 968.6 546.0 973.0 546.2C977.4 546.4 983.0 548.9 987.5 549.8C992.0 550.7 998.2 550.7 1000.0 551.5C1001.8 552.3 1000.8 554.0 998.3 554.6C995.8 555.2 989.7 555.0 985.1 555.3C980.5 555.6 974.4 556.4 970.6 556.3C966.8 556.2 963.7 555.9 962.1 554.6C960.5 553.3 959.1 550.0 960.9 548.6Z"/>
<path d="M1052.5 539.5C1053.3 537.9 1056.6 537.0 1059.1 537.0C1061.6 537.0 1064.7 538.3 1067.3 539.5C1069.9 540.7 1073.9 543.0 1074.7 544.4C1075.5 545.8 1074.2 547.0 1072.2 547.7C1070.2 548.4 1065.4 548.6 1062.4 548.5C1059.4 548.4 1055.9 548.4 1054.2 546.9C1052.5 545.4 1051.7 541.1 1052.5 539.5Z"/>
<path d="M1180.0 834.0C1181.5 833.0 1185.3 832.7 1189.0 832.0C1192.7 831.3 1198.8 829.7 1202.0 830.0C1205.2 830.3 1206.2 831.8 1208.0 834.0C1209.8 836.2 1213.3 841.2 1213.0 843.0C1212.7 844.8 1208.7 845.0 1206.0 845.0C1203.3 845.0 1199.8 844.0 1197.0 843.0C1194.2 842.0 1191.8 839.8 1189.0 839.0C1186.2 838.2 1181.5 838.8 1180.0 838.0C1178.5 837.2 1178.5 835.0 1180.0 834.0Z"/>
<path d="M1322.0 913.0C1323.8 910.3 1334.3 909.7 1337.0 912.0C1339.7 914.3 1339.8 924.3 1338.0 927.0C1336.2 929.7 1328.7 930.3 1326.0 928.0C1323.3 925.7 1320.2 915.7 1322.0 913.0Z"/>
<path d="M1403.0 998.0C1405.0 996.5 1415.2 995.2 1418.0 996.0C1420.8 996.8 1422.0 1001.5 1420.0 1003.0C1418.0 1004.5 1408.8 1005.8 1406.0 1005.0C1403.2 1004.2 1401.0 999.5 1403.0 998.0Z"/>
<path d="M857.0 318.0C857.3 316.7 861.5 315.2 864.0 315.0C866.5 314.8 870.8 315.8 872.0 317.0C873.2 318.2 872.7 321.0 871.0 322.0C869.3 323.0 864.3 323.7 862.0 323.0C859.7 322.3 856.7 319.3 857.0 318.0Z"/>
<path d="M825.0 342.0C825.3 340.7 829.2 338.7 832.0 338.0C834.8 337.3 840.5 337.0 842.0 338.0C843.5 339.0 843.0 342.7 841.0 344.0C839.0 345.3 832.7 346.3 830.0 346.0C827.3 345.7 824.7 343.3 825.0 342.0Z"/>
<path d="M885.0 299.0C885.5 297.2 889.5 295.2 892.0 295.0C894.5 294.8 898.8 296.3 900.0 298.0C901.2 299.7 900.8 303.7 899.0 305.0C897.2 306.3 891.3 307.0 889.0 306.0C886.7 305.0 884.5 300.8 885.0 299.0Z"/>
<path d="M45.0 282.0C45.7 280.2 48.5 278.0 50.0 279.0C51.5 280.0 54.0 285.7 54.0 288.0C54.0 290.3 51.3 292.7 50.0 293.0C48.7 293.3 46.8 291.8 46.0 290.0C45.2 288.2 44.3 283.8 45.0 282.0Z"/>
</g>
<defs><filter id="patch" x="0" y="145" width="1620" height="891" filterUnits="userSpaceOnUse"><feTurbulence type="fractalNoise" baseFrequency="0.11" numOctaves="2" seed="7" result="n"/><feColorMatrix in="n" type="matrix" values="0 0 0 0 0  0 0 0 0 0  0 0 0 0 0  0 0 0 7 -3.05" result="m"/><feComposite in="SourceGraphic" in2="m" operator="in"/></filter></defs>
<g fill="#98c79e" opacity="0.95">
<path d="M735.0 335.0C740.8 331.2 756.3 327.5 765.0 327.0C773.7 326.5 780.0 330.3 787.0 332.0C794.0 333.7 804.5 334.5 807.0 337.0C809.5 339.5 806.5 344.5 802.0 347.0C797.5 349.5 785.8 349.0 780.0 352.0C774.2 355.0 771.2 359.5 767.0 365.0C762.8 370.5 758.2 378.5 755.0 385.0C751.8 391.5 749.7 396.7 748.0 404.0C746.3 411.3 746.0 420.7 745.0 429.0C744.0 437.3 744.5 447.3 742.0 454.0C739.5 460.7 736.2 464.8 730.0 469.0C723.8 473.2 710.8 474.0 705.0 479.0C699.2 484.0 699.2 494.8 695.0 499.0C690.8 503.2 686.7 500.7 680.0 504.0C673.3 507.3 662.5 518.2 655.0 519.0C647.5 519.8 639.2 513.2 635.0 509.0C630.8 504.8 635.8 494.8 630.0 494.0C624.2 493.2 605.8 504.8 600.0 504.0C594.2 503.2 592.5 493.2 595.0 489.0C597.5 484.8 614.2 482.8 615.0 479.0C615.8 475.2 602.5 470.2 600.0 466.0C597.5 461.8 595.0 456.5 600.0 454.0C605.0 451.5 621.7 450.2 630.0 451.0C638.3 451.8 643.3 459.3 650.0 459.0C656.7 458.7 665.5 454.0 670.0 449.0C674.5 444.0 674.5 434.8 677.0 429.0C679.5 423.2 681.2 418.8 685.0 414.0C688.8 409.2 697.2 407.3 700.0 400.0C702.8 392.7 699.2 376.7 702.0 370.0C704.8 363.3 712.3 363.3 717.0 360.0C721.7 356.7 727.0 354.2 730.0 350.0C733.0 345.8 729.2 338.8 735.0 335.0Z"/>
<path d="M852.4 462.2C854.0 458.7 858.0 458.6 862.0 458.8C866.0 459.0 871.3 462.4 876.5 463.4C881.7 464.4 890.2 461.3 893.4 464.6C896.6 467.9 898.6 480.1 895.8 483.4C893.0 486.6 882.1 484.2 876.5 484.1C870.9 484.0 866.0 483.6 862.0 482.9C858.0 482.2 854.0 483.2 852.4 479.8C850.8 476.4 850.8 465.7 852.4 462.2Z"/>
<path d="M944.1 472.6C945.3 470.2 950.3 471.8 953.7 470.2C957.1 468.6 961.8 461.9 964.6 462.9C967.4 463.9 971.6 472.9 970.6 476.2C969.6 479.5 962.5 481.5 958.5 482.9C954.5 484.3 948.9 486.3 946.5 484.6C944.1 482.9 942.9 475.0 944.1 472.6Z"/>
<path d="M1206.9 514.7C1208.8 512.6 1216.2 511.2 1220.4 511.9C1224.6 512.5 1227.8 517.3 1232.0 518.6C1236.2 519.9 1241.8 517.7 1245.5 519.6C1249.2 521.5 1252.9 527.2 1254.2 530.2C1255.5 533.2 1256.3 536.3 1253.2 537.9C1250.1 539.5 1240.6 540.1 1235.8 539.8C1231.0 539.5 1228.0 537.0 1224.2 536.0C1220.4 535.0 1215.3 536.0 1212.7 534.1C1210.1 532.2 1209.8 527.6 1208.8 524.4C1207.8 521.2 1205.0 516.8 1206.9 514.7Z"/>
<path d="M1363.2 541.8C1364.8 539.2 1368.4 543.0 1371.0 545.6C1373.6 548.2 1375.5 553.3 1378.7 557.2C1381.9 561.1 1386.4 566.2 1390.3 568.8C1394.2 571.4 1398.7 569.5 1401.9 572.7C1405.1 575.9 1406.6 584.2 1409.6 588.1C1412.6 592.0 1416.2 593.2 1420.0 595.8C1423.8 598.4 1427.4 601.0 1432.7 603.6C1438.0 606.2 1448.5 609.4 1452.0 611.3C1455.5 613.2 1457.2 615.1 1454.0 615.1C1450.8 615.1 1438.4 613.2 1432.7 611.3C1427.0 609.4 1424.5 605.5 1420.0 603.6C1415.5 601.7 1410.7 601.6 1405.7 599.7C1400.8 597.8 1396.1 593.9 1390.3 592.0C1384.5 590.1 1375.8 593.2 1371.0 588.1C1366.2 583.0 1362.6 568.8 1361.3 561.1C1360.0 553.4 1361.6 544.4 1363.2 541.8Z"/>
<path d="M1412.0 613.0C1414.0 609.8 1426.0 609.8 1432.0 611.0C1438.0 612.2 1444.7 615.8 1448.0 620.0C1451.3 624.2 1453.7 633.0 1452.0 636.0C1450.3 639.0 1443.3 639.0 1438.0 638.0C1432.7 637.0 1424.3 634.2 1420.0 630.0C1415.7 625.8 1410.0 616.2 1412.0 613.0Z"/>
</g>
<g fill="#9ac8a0" opacity="0.9" filter="url(#patch)">
<path d="M210.0 140.0C213.8 135.0 221.0 134.2 221.0 140.0C221.0 145.8 213.5 163.8 210.0 175.0C206.5 186.2 202.7 195.3 200.0 207.0C197.3 218.7 196.5 238.7 194.0 245.0C191.5 251.3 185.7 251.3 185.0 245.0C184.3 238.7 187.8 219.5 190.0 207.0C192.2 194.5 194.7 181.2 198.0 170.0C201.3 158.8 206.2 145.0 210.0 140.0Z"/>
<path d="M275.0 315.0C282.2 310.8 288.8 308.3 295.0 310.0C301.2 311.7 306.7 318.3 312.0 325.0C317.3 331.7 324.0 342.5 327.0 350.0C330.0 357.5 330.8 364.2 330.0 370.0C329.2 375.8 327.0 380.8 322.0 385.0C317.0 389.2 307.0 395.0 300.0 395.0C293.0 395.0 285.8 389.2 280.0 385.0C274.2 380.8 268.3 375.8 265.0 370.0C261.7 364.2 262.2 355.8 260.0 350.0C257.8 344.2 249.5 340.8 252.0 335.0C254.5 329.2 267.8 319.2 275.0 315.0Z"/>
<path d="M336.0 419.0C338.0 415.8 354.0 416.5 358.0 421.0C362.0 425.5 362.0 442.8 360.0 446.0C358.0 449.2 350.0 444.5 346.0 440.0C342.0 435.5 334.0 422.2 336.0 419.0Z"/>
<path d="M97.0 334.0C99.3 331.7 112.0 336.5 120.0 338.0C128.0 339.5 138.3 341.3 145.0 343.0C151.7 344.7 155.8 345.5 160.0 348.0C164.2 350.5 167.0 354.0 170.0 358.0C173.0 362.0 175.3 366.3 178.0 372.0C180.7 377.7 183.3 386.0 186.0 392.0C188.7 398.0 191.7 402.0 194.0 408.0C196.3 414.0 199.7 422.3 200.0 428.0C200.3 433.7 199.0 441.3 196.0 442.0C193.0 442.7 186.7 435.0 182.0 432.0C177.3 429.0 172.7 428.7 168.0 424.0C163.3 419.3 159.0 409.7 154.0 404.0C149.0 398.3 143.7 395.3 138.0 390.0C132.3 384.7 125.3 378.3 120.0 372.0C114.7 365.7 109.8 358.3 106.0 352.0C102.2 345.7 94.7 336.3 97.0 334.0Z"/>
<path d="M247.0 521.0C249.5 517.2 265.3 518.0 270.0 521.0C274.7 524.0 271.3 534.3 275.0 539.0C278.7 543.7 288.7 544.0 292.0 549.0C295.3 554.0 291.7 563.2 295.0 569.0C298.3 574.8 308.7 579.5 312.0 584.0C315.3 588.5 317.8 594.8 315.0 596.0C312.2 597.2 300.8 593.8 295.0 591.0C289.2 588.2 285.5 583.5 280.0 579.0C274.5 574.5 266.2 569.8 262.0 564.0C257.8 558.2 257.5 551.2 255.0 544.0C252.5 536.8 244.5 524.8 247.0 521.0Z"/>
<path d="M297.0 474.0C299.2 471.8 311.7 473.5 315.0 476.0C318.3 478.5 319.2 486.8 317.0 489.0C314.8 491.2 305.3 491.5 302.0 489.0C298.7 486.5 294.8 476.2 297.0 474.0Z"/>
<path d="M300.0 516.0C302.3 513.7 314.3 515.0 317.0 518.0C319.7 521.0 318.3 531.7 316.0 534.0C313.7 536.3 305.7 535.0 303.0 532.0C300.3 529.0 297.7 518.3 300.0 516.0Z"/>
<path d="M818.6 582.3C822.6 578.1 836.2 578.3 840.3 581.1C844.4 583.9 842.9 593.8 843.2 599.2C843.5 604.6 845.5 611.3 842.2 613.7C838.9 616.1 827.7 614.9 823.4 613.7C819.1 612.5 817.0 611.7 816.2 606.5C815.4 601.3 814.6 586.5 818.6 582.3Z"/>
<path d="M821.5 619.7C824.2 615.3 834.8 612.3 837.9 618.5C841.0 624.7 842.1 650.5 840.3 657.1C838.5 663.7 830.1 660.3 827.0 658.3C823.9 656.3 822.4 651.5 821.5 645.1C820.6 638.7 818.8 624.1 821.5 619.7Z"/>
<path d="M859.6 589.6C861.0 586.4 867.3 583.9 871.7 583.5C876.1 583.1 881.4 585.0 886.2 587.2C891.0 589.4 897.8 592.4 900.6 596.8C903.4 601.2 905.0 610.1 903.0 613.7C901.0 617.3 893.4 619.3 888.6 618.5C883.8 617.7 878.3 611.5 874.1 608.9C869.9 606.3 865.6 606.0 863.2 602.8C860.8 599.6 858.2 592.8 859.6 589.6Z"/>
<path d="M876.5 565.5C877.8 564.9 881.6 566.5 883.7 568.3C885.8 570.1 889.4 574.6 889.0 576.3C888.6 578.0 883.5 579.4 881.3 578.7C879.1 578.0 876.8 574.4 876.0 572.2C875.2 570.0 875.2 566.1 876.5 565.5Z"/>
<path d="M1065.6 438.6C1067.2 437.5 1068.9 439.2 1069.7 441.0C1070.5 442.8 1070.9 445.8 1070.2 449.2C1069.5 452.6 1067.7 458.5 1065.6 461.5C1063.5 464.5 1059.0 467.7 1057.4 467.3C1055.8 466.9 1055.4 462.4 1055.8 459.1C1056.2 455.8 1058.3 451.0 1059.9 447.6C1061.5 444.2 1064.0 439.7 1065.6 438.6Z"/>
<path d="M1074.7 458.3C1075.8 455.6 1077.8 454.5 1080.4 453.3C1083.0 452.1 1088.6 450.2 1090.3 451.2C1092.0 452.2 1091.4 456.7 1090.7 459.1C1090.0 461.5 1088.2 464.0 1086.2 465.6C1084.2 467.2 1080.9 468.2 1078.8 468.9C1076.7 469.6 1074.5 471.5 1073.8 469.7C1073.1 467.9 1073.6 461.0 1074.7 458.3Z"/>
<path d="M1480.0 712.0C1485.8 709.3 1506.7 710.0 1520.0 710.0C1533.3 710.0 1551.3 709.0 1560.0 712.0C1568.7 715.0 1574.5 724.3 1572.0 728.0C1569.5 731.7 1555.3 733.7 1545.0 734.0C1534.7 734.3 1520.0 731.3 1510.0 730.0C1500.0 728.7 1490.0 729.0 1485.0 726.0C1480.0 723.0 1474.2 714.7 1480.0 712.0Z"/>
<path d="M1486.0 745.0C1489.3 742.5 1502.7 741.8 1510.0 743.0C1517.3 744.2 1527.0 748.2 1530.0 752.0C1533.0 755.8 1532.2 763.3 1528.0 766.0C1523.8 768.7 1511.3 769.3 1505.0 768.0C1498.7 766.7 1493.2 761.8 1490.0 758.0C1486.8 754.2 1482.7 747.5 1486.0 745.0Z"/>
<path d="M587.1 555.7C591.9 552.1 605.0 552.1 615.7 552.1C626.4 552.1 644.2 551.5 651.4 555.7C658.5 559.9 659.2 570.2 658.6 577.1C658.0 584.0 653.9 594.4 647.9 596.8C641.9 599.2 631.2 593.5 622.9 591.4C614.6 589.3 603.9 587.3 597.9 584.3C591.9 581.3 588.9 578.4 587.1 573.6C585.3 568.8 582.3 559.3 587.1 555.7Z"/>
<path d="M569.3 412.9C571.7 409.9 583.5 408.7 587.1 411.1C590.7 413.5 593.1 424.1 590.7 427.1C588.3 430.1 576.5 431.3 572.9 428.9C569.3 426.5 566.9 415.9 569.3 412.9Z"/>
<path d="M633.6 387.9C635.7 385.2 643.7 387.9 647.9 386.1C652.1 384.3 653.2 379.2 658.6 377.1C664.0 375.0 676.4 373.0 680.0 373.6C683.6 374.2 683.6 377.4 680.0 380.7C676.4 384.0 664.0 389.3 658.6 393.2C653.2 397.1 651.8 402.4 647.9 403.9C644.0 405.4 637.8 404.8 635.4 402.1C633.0 399.4 631.5 390.6 633.6 387.9Z"/>
<path d="M680.0 587.9C681.2 583.1 690.7 581.3 694.3 584.3C697.9 587.3 702.6 600.9 701.4 605.7C700.2 610.5 690.7 615.9 687.1 612.9C683.5 609.9 678.8 592.7 680.0 587.9Z"/>
<path d="M726.4 516.4C727.9 514.0 735.0 512.8 737.1 514.6C739.2 516.4 740.4 524.7 738.9 527.1C737.4 529.5 730.3 530.7 728.2 528.9C726.1 527.1 724.9 518.8 726.4 516.4Z"/>
<path d="M580.0 516.4C583.9 512.8 597.2 508.7 601.4 509.3C605.6 509.9 607.4 515.8 605.0 520.0C602.6 524.2 591.6 532.5 587.1 534.3C582.6 536.1 579.4 533.7 578.2 530.7C577.0 527.7 576.1 520.0 580.0 516.4Z"/>
<path d="M730.0 377.1C735.4 372.9 756.1 371.2 762.1 373.6C768.1 376.0 768.7 386.0 765.7 391.4C762.7 396.8 750.2 404.5 744.3 405.7C738.3 406.9 732.4 403.4 730.0 398.6C727.6 393.8 724.6 381.3 730.0 377.1Z"/>
<path d="M326.0 145.0C327.7 140.5 340.7 141.7 345.0 145.0C349.3 148.3 352.0 159.2 352.0 165.0C352.0 170.8 347.8 178.8 345.0 180.0C342.2 181.2 338.2 177.8 335.0 172.0C331.8 166.2 324.3 149.5 326.0 145.0Z"/>
<path d="M440.0 150.0C442.5 145.0 461.7 145.0 470.0 145.0C478.3 145.0 488.3 146.2 490.0 150.0C491.7 153.8 485.8 163.8 480.0 168.0C474.2 172.2 461.7 178.0 455.0 175.0C448.3 172.0 437.5 155.0 440.0 150.0Z"/>
<path d="M425.0 700.0C428.7 698.0 441.2 696.7 450.0 698.0C458.8 699.3 473.7 704.0 478.0 708.0C482.3 712.0 480.7 720.7 476.0 722.0C471.3 723.3 458.0 718.0 450.0 716.0C442.0 714.0 432.2 712.7 428.0 710.0C423.8 707.3 421.3 702.0 425.0 700.0Z"/>
<path d="M545.0 702.0C546.7 698.7 556.5 695.7 562.0 696.0C567.5 696.3 576.0 700.7 578.0 704.0C580.0 707.3 578.3 714.0 574.0 716.0C569.7 718.0 556.8 718.3 552.0 716.0C547.2 713.7 543.3 705.3 545.0 702.0Z"/>
<path d="M612.0 728.0C616.2 726.0 631.3 732.3 640.0 734.0C648.7 735.7 659.7 734.7 664.0 738.0C668.3 741.3 670.0 751.7 666.0 754.0C662.0 756.3 648.5 753.3 640.0 752.0C631.5 750.7 619.7 750.0 615.0 746.0C610.3 742.0 607.8 730.0 612.0 728.0Z"/>
<path d="M990.0 215.0C990.3 210.3 995.8 209.2 1000.0 212.0C1004.2 214.8 1011.3 223.7 1015.0 232.0C1018.7 240.3 1021.5 252.3 1022.0 262.0C1022.5 271.7 1020.8 284.0 1018.0 290.0C1015.2 296.0 1007.5 301.3 1005.0 298.0C1002.5 294.7 1004.2 279.7 1003.0 270.0C1001.8 260.3 1000.2 249.2 998.0 240.0C995.8 230.8 989.7 219.7 990.0 215.0Z"/>
<path d="M955.0 262.0C958.8 253.7 978.3 247.8 985.0 250.0C991.7 252.2 995.0 265.8 995.0 275.0C995.0 284.2 990.5 300.8 985.0 305.0C979.5 309.2 967.0 307.2 962.0 300.0C957.0 292.8 951.2 270.3 955.0 262.0Z"/>
<path d="M775.0 744.0C779.5 741.3 800.0 741.3 805.0 744.0C810.0 746.7 809.5 757.3 805.0 760.0C800.5 762.7 783.0 762.7 778.0 760.0C773.0 757.3 770.5 746.7 775.0 744.0Z"/>
<path d="M960.0 775.0C964.2 768.7 986.7 756.5 1000.0 752.0C1013.3 747.5 1033.3 746.7 1040.0 748.0C1046.7 749.3 1046.7 756.0 1040.0 760.0C1033.3 764.0 1010.8 767.0 1000.0 772.0C989.2 777.0 981.7 789.5 975.0 790.0C968.3 790.5 955.8 781.3 960.0 775.0Z"/>
<path d="M1070.0 586.0C1078.0 584.2 1106.7 579.7 1120.0 582.0C1133.3 584.3 1146.7 596.3 1150.0 600.0C1153.3 603.7 1148.3 605.0 1140.0 604.0C1131.7 603.0 1111.3 595.8 1100.0 594.0C1088.7 592.2 1077.0 594.3 1072.0 593.0C1067.0 591.7 1062.0 587.8 1070.0 586.0Z"/>
<path d="M1012.0 594.0C1014.5 591.2 1029.7 589.3 1035.0 591.0C1040.3 592.7 1046.5 601.2 1044.0 604.0C1041.5 606.8 1025.3 609.7 1020.0 608.0C1014.7 606.3 1009.5 596.8 1012.0 594.0Z"/>
<path d="M1524.0 890.0C1524.7 885.7 1528.8 887.8 1530.0 892.0C1531.2 896.2 1531.7 910.7 1531.0 915.0C1530.3 919.3 1527.2 922.2 1526.0 918.0C1524.8 913.8 1523.3 894.3 1524.0 890.0Z"/>
<path d="M1545.0 990.0C1547.5 983.8 1567.5 975.8 1575.0 975.0C1582.5 974.2 1587.2 979.2 1590.0 985.0C1592.8 990.8 1597.0 1005.5 1592.0 1010.0C1587.0 1014.5 1567.8 1015.3 1560.0 1012.0C1552.2 1008.7 1542.5 996.2 1545.0 990.0Z"/>
<path d="M105.0 411.0C105.0 409.5 108.3 408.3 112.0 410.0C115.7 411.7 125.0 418.3 127.0 421.0C129.0 423.7 126.5 426.3 124.0 426.0C121.5 425.7 115.2 421.5 112.0 419.0C108.8 416.5 105.0 412.5 105.0 411.0Z"/>
<path d="M193.0 526.0C193.7 523.3 197.2 522.0 200.0 524.0C202.8 526.0 208.0 533.8 210.0 538.0C212.0 542.2 213.0 546.8 212.0 549.0C211.0 551.2 206.7 552.5 204.0 551.0C201.3 549.5 197.8 544.2 196.0 540.0C194.2 535.8 192.3 528.7 193.0 526.0Z"/>
<path d="M1077.1 424.6C1077.6 423.0 1078.8 420.6 1080.4 419.7C1082.1 418.8 1085.3 418.2 1087.0 418.9C1088.7 419.6 1090.0 421.8 1090.3 423.8C1090.6 425.9 1089.7 429.3 1088.6 431.2C1087.5 433.1 1085.3 434.6 1083.7 435.3C1082.1 436.0 1079.9 436.3 1078.8 435.3C1077.7 434.3 1077.4 431.3 1077.1 429.5C1076.8 427.7 1076.5 426.2 1077.1 424.6Z"/>
<path d="M1052.5 539.5C1053.3 537.9 1056.6 537.0 1059.1 537.0C1061.6 537.0 1064.7 538.3 1067.3 539.5C1069.9 540.7 1073.9 543.0 1074.7 544.4C1075.5 545.8 1074.2 547.0 1072.2 547.7C1070.2 548.4 1065.4 548.6 1062.4 548.5C1059.4 548.4 1055.9 548.4 1054.2 546.9C1052.5 545.4 1051.7 541.1 1052.5 539.5Z"/>
<path d="M45.0 282.0C45.7 280.2 48.5 278.0 50.0 279.0C51.5 280.0 54.0 285.7 54.0 288.0C54.0 290.3 51.3 292.7 50.0 293.0C48.7 293.3 46.8 291.8 46.0 290.0C45.2 288.2 44.3 283.8 45.0 282.0Z"/>
</g>
<g fill="none" stroke="#b095b6" stroke-width="1" stroke-linejoin="round" opacity="0.8">
<path d="M172.0 404.0C172.5 406.5 173.7 414.5 175.0 419.0C176.3 423.5 179.2 429.0 180.0 431.0"/>
<path d="M242.0 424.0C241.7 427.3 241.2 437.8 240.0 444.0C238.8 450.2 235.0 455.2 235.0 461.0C235.0 466.8 236.7 474.3 240.0 479.0C243.3 483.7 250.0 484.8 255.0 489.0C260.0 493.2 265.5 499.5 270.0 504.0C274.5 508.5 278.7 511.8 282.0 516.0C285.3 520.2 289.5 524.3 290.0 529.0C290.5 533.7 288.3 540.7 285.0 544.0C281.7 547.3 273.0 546.5 270.0 549.0C267.0 551.5 265.3 554.8 267.0 559.0C268.7 563.2 275.3 570.3 280.0 574.0C284.7 577.7 290.0 577.7 295.0 581.0C300.0 584.3 305.8 590.2 310.0 594.0C314.2 597.8 318.0 599.8 320.0 604.0C322.0 608.2 319.5 614.8 322.0 619.0C324.5 623.2 331.2 625.3 335.0 629.0C338.8 632.7 340.8 638.5 345.0 641.0C349.2 643.5 355.8 641.8 360.0 644.0C364.2 646.2 368.3 652.3 370.0 654.0"/>
<path d="M290.0 529.0C293.3 527.7 303.0 522.7 310.0 521.0C317.0 519.3 325.8 518.5 332.0 519.0C338.2 519.5 344.5 523.2 347.0 524.0"/>
<path d="M310.0 574.0C313.7 571.5 326.7 563.2 332.0 559.0C337.3 554.8 336.5 551.2 342.0 549.0C347.5 546.8 361.2 546.5 365.0 546.0"/>
<path d="M365.0 644.0C368.3 640.7 380.0 629.8 385.0 624.0C390.0 618.2 391.7 610.7 395.0 609.0C398.3 607.3 403.3 613.2 405.0 614.0"/>
<path d="M630.0 501.0C625.8 503.2 613.3 509.3 605.0 514.0C596.7 518.7 587.5 523.7 580.0 529.0C572.5 534.3 563.0 539.8 560.0 546.0C557.0 552.2 561.2 560.5 562.0 566.0C562.8 571.5 564.5 576.8 565.0 579.0"/>
<path d="M687.0 499.0C687.8 502.3 689.0 513.2 692.0 519.0C695.0 524.8 703.7 529.0 705.0 534.0C706.3 539.0 702.2 544.8 700.0 549.0C697.8 553.2 696.2 554.8 692.0 559.0C687.8 563.2 679.5 568.2 675.0 574.0C670.5 579.8 667.2 589.5 665.0 594.0C662.8 598.5 662.5 599.8 662.0 601.0"/>
<path d="M705.0 559.0C708.3 560.7 721.3 568.2 725.0 569.0C728.7 569.8 726.7 564.8 727.0 564.0"/>
<path d="M745.0 429.0C747.8 429.3 757.5 431.5 762.0 431.0C766.5 430.5 770.3 426.8 772.0 426.0"/>
<path d="M630.0 501.0C630.8 498.5 631.7 490.2 635.0 486.0C638.3 481.8 642.5 478.0 650.0 476.0C657.5 474.0 674.2 472.3 680.0 474.0C685.8 475.7 685.8 482.7 685.0 486.0C684.2 489.3 674.7 491.8 675.0 494.0C675.3 496.2 685.0 498.2 687.0 499.0"/>
<path d="M1235.0 521.0C1234.5 523.2 1235.0 531.0 1232.0 534.0C1229.0 537.0 1220.7 535.7 1217.0 539.0C1213.3 542.3 1211.2 551.5 1210.0 554.0"/>
<path d="M1267.0 574.0C1267.8 577.3 1269.5 589.0 1272.0 594.0C1274.5 599.0 1279.5 600.3 1282.0 604.0C1284.5 607.7 1287.8 613.2 1287.0 616.0C1286.2 618.8 1279.8 617.2 1277.0 621.0C1274.2 624.8 1271.2 636.0 1270.0 639.0"/>
<path d="M1310.0 579.0C1312.5 580.7 1318.3 587.3 1325.0 589.0C1331.7 590.7 1342.5 589.5 1350.0 589.0C1357.5 588.5 1361.7 585.2 1370.0 586.0C1378.3 586.8 1388.3 591.0 1400.0 594.0C1411.7 597.0 1430.3 601.7 1440.0 604.0C1449.7 606.3 1455.0 607.3 1458.0 608.0"/>
<path d="M1370.0 586.0C1370.3 589.0 1372.8 596.8 1372.0 604.0C1371.2 611.2 1366.7 621.5 1365.0 629.0C1363.3 636.5 1362.8 643.3 1362.0 649.0C1361.2 654.7 1360.3 660.7 1360.0 663.0"/>
<path d="M1507.0 599.0C1506.7 602.2 1511.3 613.8 1505.0 618.0C1498.7 622.2 1475.0 621.3 1469.0 624.0C1463.0 626.7 1464.3 632.2 1469.0 634.0C1473.7 635.8 1492.3 631.7 1497.0 635.0C1501.7 638.3 1497.0 650.8 1497.0 654.0"/>
<path d="M1565.0 616.0C1565.0 619.0 1567.5 629.0 1565.0 634.0C1562.5 639.0 1559.2 644.0 1550.0 646.0C1540.8 648.0 1516.7 646.0 1510.0 646.0"/>
<path d="M1380.0 636.0C1382.5 636.5 1391.7 637.5 1395.0 639.0C1398.3 640.5 1394.2 643.5 1400.0 645.0C1405.8 646.5 1420.5 646.2 1430.0 648.0C1439.5 649.8 1445.8 654.7 1457.0 656.0C1468.2 657.3 1490.3 656.0 1497.0 656.0"/>
<path d="M1506.0 668.0C1506.2 673.3 1497.2 694.8 1507.0 700.0C1516.8 705.2 1551.7 697.7 1565.0 699.0C1578.3 700.3 1579.5 704.5 1587.0 708.0C1594.5 711.5 1604.5 717.3 1610.0 720.0C1615.5 722.7 1618.3 723.3 1620.0 724.0"/>
<path d="M1555.0 670.0C1558.3 673.0 1569.7 683.8 1575.0 688.0C1580.3 692.2 1582.8 694.7 1587.0 695.0C1591.2 695.3 1596.2 689.2 1600.0 690.0C1603.8 690.8 1608.3 698.3 1610.0 700.0"/>
<path d="M262.0 320.0C263.0 322.5 268.0 330.0 268.0 335.0C268.0 340.0 261.7 345.0 262.0 350.0C262.3 355.0 266.2 361.3 270.0 365.0C273.8 368.7 280.0 371.5 285.0 372.0C290.0 372.5 295.5 371.3 300.0 368.0C304.5 364.7 309.0 357.5 312.0 352.0C315.0 346.5 317.0 337.8 318.0 335.0"/>
<path d="M270.0 365.0C269.7 368.3 266.3 379.5 268.0 385.0C269.7 390.5 275.5 395.5 280.0 398.0C284.5 400.5 292.5 399.7 295.0 400.0"/>
<path d="M300.0 368.0C300.8 370.8 301.3 381.0 305.0 385.0C308.7 389.0 319.2 390.8 322.0 392.0"/>
<path d="M205.0 180.0C206.7 179.7 212.2 176.3 215.0 178.0C217.8 179.7 220.8 188.0 222.0 190.0"/>
<path d="M200.0 215.0C202.0 215.3 209.0 214.2 212.0 217.0C215.0 219.8 214.7 228.5 218.0 232.0C221.3 235.5 229.7 237.0 232.0 238.0"/>
<path d="M345.0 145.0C346.2 147.5 348.7 156.2 352.0 160.0C355.3 163.8 361.7 164.3 365.0 168.0C368.3 171.7 370.8 179.7 372.0 182.0"/>
<path d="M372.0 182.0C375.3 181.0 385.7 179.7 392.0 176.0C398.3 172.3 405.7 165.2 410.0 160.0C414.3 154.8 416.7 147.5 418.0 145.0"/>
<path d="M392.0 176.0C393.0 179.2 398.0 188.5 398.0 195.0C398.0 201.5 393.0 211.7 392.0 215.0"/>
<path d="M430.0 175.0C431.7 178.3 439.0 188.8 440.0 195.0C441.0 201.2 436.7 209.2 436.0 212.0"/>
<path d="M587.1 555.7C591.9 555.1 605.0 552.1 615.7 552.1C626.4 552.1 644.2 551.5 651.4 555.7C658.5 559.9 659.2 570.2 658.6 577.1C658.0 584.0 653.9 594.4 647.9 596.8C641.9 599.2 631.2 593.5 622.9 591.4C614.6 589.3 603.9 587.3 597.9 584.3C591.9 581.3 588.9 575.4 587.1 573.6"/>
<path d="M569.3 412.9C572.3 412.6 583.5 408.7 587.1 411.1C590.7 413.5 593.1 424.1 590.7 427.1C588.3 430.1 575.9 428.6 572.9 428.9"/>
<path d="M633.6 387.9C636.0 387.6 643.7 387.9 647.9 386.1C652.1 384.3 653.2 379.2 658.6 377.1C664.0 375.0 676.4 373.0 680.0 373.6C683.6 374.2 683.6 377.4 680.0 380.7C676.4 384.0 664.0 389.3 658.6 393.2C653.2 397.1 651.8 402.4 647.9 403.9C644.0 405.4 637.5 402.4 635.4 402.1"/>
<path d="M680.0 587.9C682.4 587.3 690.7 581.3 694.3 584.3C697.9 587.3 702.6 600.9 701.4 605.7C700.2 610.5 689.5 611.7 687.1 612.9"/>
<path d="M726.4 516.4C728.2 516.1 735.0 512.8 737.1 514.6C739.2 516.4 740.4 524.7 738.9 527.1C737.4 529.5 730.0 528.6 728.2 528.9"/>
<path d="M580.0 516.4C583.6 515.2 597.2 508.7 601.4 509.3C605.6 509.9 607.4 515.8 605.0 520.0C602.6 524.2 591.6 532.5 587.1 534.3C582.6 536.1 579.7 531.3 578.2 530.7"/>
<path d="M730.0 377.1C735.4 376.5 756.1 371.2 762.1 373.6C768.1 376.0 768.7 386.0 765.7 391.4C762.7 396.8 750.2 404.5 744.3 405.7C738.3 406.9 732.4 399.8 730.0 398.6"/>
<path d="M326.0 145.0C329.2 145.0 340.7 141.7 345.0 145.0C349.3 148.3 352.0 159.2 352.0 165.0C352.0 170.8 347.8 178.8 345.0 180.0C342.2 181.2 336.7 173.3 335.0 172.0"/>
<path d="M440.0 150.0C445.0 149.2 461.7 145.0 470.0 145.0C478.3 145.0 488.3 146.2 490.0 150.0C491.7 153.8 485.8 163.8 480.0 168.0C474.2 172.2 459.2 173.8 455.0 175.0"/>
<path d="M497.0 698.0C497.5 700.8 500.5 709.3 500.0 715.0C499.5 720.7 495.0 729.2 494.0 732.0"/>
<path d="M583.0 702.0C582.5 705.0 579.5 712.3 580.0 720.0C580.5 727.7 585.0 743.3 586.0 748.0"/>
<path d="M548.0 722.0C548.7 725.3 551.3 738.7 552.0 742.0"/>
<path d="M962.0 262.0C964.2 263.3 971.2 270.0 975.0 270.0C978.8 270.0 982.2 261.2 985.0 262.0C987.8 262.8 992.0 269.5 992.0 275.0C992.0 280.5 986.2 291.7 985.0 295.0"/>
<path d="M985.0 240.0C986.2 242.5 988.7 251.3 992.0 255.0C995.3 258.7 1001.7 257.8 1005.0 262.0C1008.3 266.2 1010.8 277.0 1012.0 280.0"/>
<path d="M985.0 762.0C985.8 763.7 987.5 770.7 990.0 772.0C992.5 773.3 998.3 770.3 1000.0 770.0"/>
</g>
<g fill="none" stroke="#917fa3" stroke-width="1.35" stroke-linejoin="round" opacity="0.85">
<polyline points="86,310 79,317 90,351 90,398 137,454 180,519 232,590 258,620 297,667 349,661 383,702 430,723 486,736 529,741 559,749 611,758 671,766 740,775 783,771 802,793 832,813 842,813 869,828 886,823 918,833 982,792 999,784"/>
<polyline points="86,310 133,332 163,338 189,360 240,385 275,411 318,446 344,463 374,454 376,428 361,411 344,385 348,351 326,321 301,306 296,274 275,252 249,218 223,184 232,140"/>
<polyline points="376,428 391,428 389,411 404,394 451,373 472,347 485,355 503,394 524,428 554,433 576,403 623,385 670,347 687,308 739,270 756,252 790,190 808,140"/>
<polyline points="524,428 485,454 477,489 485,557 515,559 511,590 504,618"/>
<polyline points="314,140 314,175 326,214 378,250 430,246 509,201 520,140"/>
<polyline points="1008,140 1025,209 1033,265 1025,308 995,340 982,334 902,310 862,338 810,364"/>
<polyline points="995,340 986,355 982,398 973,437 952,459 896,454 853,450 836,459 810,441 797,420 800,385 810,364"/>
<polyline points="740,270 772,292 770,312 792,328 815,338 822,350 810,364"/>
<polyline points="1033,330 1050,355 1044,381 1089,411 1098,437 1111,469 1149,474 1166,459 1199,501 1209,501 1257,463 1291,501 1321,523 1390,540 1446,564 1474,572 1514,536 1562,523 1587,514 1625,545"/>
<polyline points="1267,245 1276,255 1274,274 1261,293 1235,330 1212,368 1188,416 1179,419 1160,411 1157,403 1175,368 1192,332 1222,295 1244,270 1261,248 1267,245"/>
<polyline points="1061,398 999,467 995,501 947,540 980,579 980,607 997,633 995,700 997,743"/>
<polyline points="1132,482 1102,532 1102,564 1050,568 980,579"/>
<polyline points="1102,564 1154,570 1180,590 1214,637 1266,639 1296,655 1314,644"/>
<polyline points="1493,556 1577,556 1577,615"/>
<polyline points="1521,556 1521,596"/>
<polyline points="1577,586 1625,600"/>
<polyline points="422,590 439,646 504,618 512,590"/>
<polyline points="504,618 497,698"/>
<polyline points="504,618 555,637 590,644 650,650 667,644 725,657 727,629 810,607 849,590"/>
<polyline points="590,644 583,702"/>
<polyline points="725,657 721,721 749,734 810,732 898,732 898,704 995,700"/>
<polyline points="555,637 551,590"/>
<polyline points="650,650 662,604"/>
<polyline points="857,633 898,704"/>
<polyline points="952,779 954,762 999,743 1055,747 1085,753 1154,753 1189,723 1217,686 1264,715 1281,698 1281,670 1314,644 1357,659 1372,689 1352,749 1365,756 1413,751 1455,777 1481,792 1477,831 1473,883 1468,934 1464,977 1451,1020 1447,1040"/>
<polyline points="1557,779 1561,797 1542,822 1537,857 1550,891 1576,921 1598,943 1606,977 1625,1003"/>
<polyline points="887,1020 892,1003 918,969 939,956 961,934 982,913 1004,898 1034,902 1064,921 1085,932 1105,930 1111,908 1128,878 1126,844 1137,825 1167,827 1219,818 1225,835 1262,853 1283,842 1296,850 1322,831 1333,822 1339,840 1344,870 1342,908 1333,934 1309,939 1313,956 1344,973 1369,990 1400,995 1408,984 1425,990 1430,1012 1425,1040"/>
<polyline points="1099,943 1099,1040"/>
<polyline points="1368.6,997 1368.6,1040"/>
<polyline points="1455,777 1481,775 1507,771 1537,758 1550,741 1576,734 1602,738 1625,756"/>
<polyline points="1458,568 1458,777"/>
<polyline points="665,737 680,721 702,722 721,722"/>
<polyline points="702,722 705,742 702,765"/>
<polyline points="815,735 810,765 783,771"/>
<polyline points="675,748 679,766"/>
<polyline points="0,175 20,215 40,270 48,295 56,290 58,270 45,235 30,195 10,160 0,150"/>
<polyline points="150,140 165,205 158,240 170,250 176,222 180,270 205,295 215,305 200,310 205,322 225,318"/>
<polyline points="810,441 790,520 760,600 725,657"/>
<polyline points="840,497 905,497 960,510 1000,530"/>
<circle cx="661" cy="154" r="8"/>
<circle cx="683" cy="164" r="6"/>
<circle cx="707" cy="173" r="7"/>
<circle cx="657" cy="171" r="8"/>
<circle cx="649" cy="194" r="8"/>
<circle cx="664" cy="197" r="8"/>
<circle cx="621" cy="209" r="9"/>
<circle cx="702" cy="201" r="9"/>
<circle cx="726" cy="203" r="9"/>
<circle cx="588" cy="235" r="9"/>
<circle cx="606" cy="231" r="11"/>
<circle cx="649" cy="231" r="12"/>
<circle cx="672" cy="231" r="6"/>
<circle cx="627" cy="255" r="11"/>
<circle cx="657" cy="259" r="14"/>
<circle cx="670" cy="252" r="11"/>
<circle cx="629" cy="307" r="6"/>
<circle cx="788" cy="261" r="6"/>
<circle cx="1373" cy="210" r="9"/>
<circle cx="1420" cy="199" r="11"/>
<circle cx="1444" cy="204" r="6"/>
<circle cx="1353" cy="244" r="10"/>
<circle cx="1439" cy="253" r="8"/>
<circle cx="1590" cy="220" r="6"/>
<circle cx="1563" cy="239" r="7"/>
<circle cx="1544" cy="277" r="8"/>
<circle cx="1561" cy="280" r="7"/>
<circle cx="1519" cy="297" r="8"/>
<circle cx="1609" cy="270" r="10"/>
<circle cx="401.5" cy="811.6" r="9.5"/>
<circle cx="139" cy="852" r="7"/>
<circle cx="140" cy="864" r="8"/>
<circle cx="922" cy="865" r="9"/>
<circle cx="937" cy="874" r="7"/>
<circle cx="889" cy="911" r="8"/>
<circle cx="887" cy="924" r="9"/>
<circle cx="937" cy="923" r="6"/>
<circle cx="810" cy="1022" r="8"/>
<circle cx="835" cy="225" r="8"/>
<circle cx="852" cy="215" r="6"/>
<circle cx="838" cy="253" r="6"/>
<circle cx="845" cy="245" r="6"/>
<circle cx="800" cy="265" r="6"/>
<circle cx="783" cy="283" r="7"/>
<circle cx="787" cy="300" r="5"/>
</g>
<g fill="none" stroke="#9a6a9e" stroke-width="2.2" stroke-linejoin="round" opacity="0.75">
<path d="M522.0 446.0C525.2 449.5 531.3 464.2 541.0 467.0C550.7 469.8 570.0 465.5 580.0 463.0C590.0 460.5 590.3 453.5 601.0 452.0C611.7 450.5 632.5 455.8 644.0 454.0C655.5 452.2 662.8 448.2 670.0 441.0C677.2 433.8 681.3 420.2 687.0 411.0C692.7 401.8 701.2 393.2 704.0 386.0C706.8 378.8 696.8 371.3 704.0 368.0C711.2 364.7 735.5 366.0 747.0 366.0C758.5 366.0 768.7 367.7 773.0 368.0"/>
<path d="M238.0 307.0C240.8 305.8 250.0 299.5 255.0 300.0C260.0 300.5 264.7 310.0 268.0 310.0C271.3 310.0 272.2 301.2 275.0 300.0C277.8 298.8 283.3 302.5 285.0 303.0"/>
</g>
<g fill="none" stroke="#917fa3" stroke-width="1.1" opacity="0.75">
<path d="M850.0 318.0C851.0 315.2 854.3 310.7 858.0 309.0C861.7 307.3 868.3 306.8 872.0 308.0C875.7 309.2 879.3 312.8 880.0 316.0C880.7 319.2 879.0 324.7 876.0 327.0C873.0 329.3 866.0 330.2 862.0 330.0C858.0 329.8 854.0 328.0 852.0 326.0C850.0 324.0 849.0 320.8 850.0 318.0Z"/>
<path d="M817.0 343.0C818.2 340.0 821.8 334.0 826.0 332.0C830.2 330.0 838.0 330.0 842.0 331.0C846.0 332.0 849.3 334.8 850.0 338.0C850.7 341.2 849.3 347.5 846.0 350.0C842.7 352.5 834.5 353.0 830.0 353.0C825.5 353.0 821.2 351.7 819.0 350.0C816.8 348.3 815.8 346.0 817.0 343.0Z"/>
<path d="M878.0 298.0C879.5 294.8 884.0 289.3 888.0 288.0C892.0 286.7 898.7 288.0 902.0 290.0C905.3 292.0 907.8 296.5 908.0 300.0C908.2 303.5 906.3 308.8 903.0 311.0C899.7 313.2 892.0 313.7 888.0 313.0C884.0 312.3 880.7 309.5 879.0 307.0C877.3 304.5 876.5 301.2 878.0 298.0Z"/>
<path d="M897.0 182.0C899.7 178.2 904.2 177.7 910.0 177.0C915.8 176.3 925.3 178.8 932.0 178.0C938.7 177.2 943.3 171.3 950.0 172.0C956.7 172.7 967.7 177.3 972.0 182.0C976.3 186.7 977.2 194.7 976.0 200.0C974.8 205.3 970.2 210.3 965.0 214.0C959.8 217.7 950.8 219.0 945.0 222.0C939.2 225.0 935.5 230.3 930.0 232.0C924.5 233.7 917.3 234.3 912.0 232.0C906.7 229.7 901.0 223.3 898.0 218.0C895.0 212.7 894.2 206.0 894.0 200.0C893.8 194.0 894.3 185.8 897.0 182.0Z"/>
<path d="M972.0 160.0C974.3 156.7 981.0 156.7 985.0 158.0C989.0 159.3 994.2 162.7 996.0 168.0C997.8 173.3 996.7 183.3 996.0 190.0C995.3 196.7 994.3 204.7 992.0 208.0C989.7 211.3 985.0 212.0 982.0 210.0C979.0 208.0 975.8 201.3 974.0 196.0C972.2 190.7 971.3 184.0 971.0 178.0C970.7 172.0 969.7 163.3 972.0 160.0Z"/>
<path d="M884.0 150.0C885.7 144.3 893.2 142.7 900.0 142.0C906.8 141.3 919.5 142.7 925.0 146.0C930.5 149.3 933.2 156.7 933.0 162.0C932.8 167.3 928.5 174.3 924.0 178.0C919.5 181.7 911.7 184.3 906.0 184.0C900.3 183.7 893.7 181.7 890.0 176.0C886.3 170.3 882.3 155.7 884.0 150.0Z"/>
<path d="M880.0 268.0C881.7 262.3 890.2 261.3 896.0 258.0C901.8 254.7 908.5 252.3 915.0 248.0C921.5 243.7 928.3 233.3 935.0 232.0C941.7 230.7 950.8 236.7 955.0 240.0C959.2 243.3 961.2 248.3 960.0 252.0C958.8 255.7 952.2 258.0 948.0 262.0C943.8 266.0 940.5 272.7 935.0 276.0C929.5 279.3 920.8 279.3 915.0 282.0C909.2 284.7 904.8 290.3 900.0 292.0C895.2 293.7 889.3 296.0 886.0 292.0C882.7 288.0 878.3 273.7 880.0 268.0Z"/>
<path d="M946.0 290.0C947.0 286.7 949.3 274.7 952.0 270.0C954.7 265.3 958.2 257.0 962.0 262.0C965.8 267.0 970.3 288.3 975.0 300.0C979.7 311.7 985.8 328.3 990.0 332.0C994.2 335.7 997.0 325.7 1000.0 322.0C1003.0 318.3 1004.7 313.7 1008.0 310.0C1011.3 306.3 1016.3 305.0 1020.0 300.0C1023.7 295.0 1029.0 288.3 1030.0 280.0C1031.0 271.7 1028.0 259.2 1026.0 250.0C1024.0 240.8 1021.5 232.5 1018.0 225.0C1014.5 217.5 1008.7 207.8 1005.0 205.0C1001.3 202.2 997.5 207.5 996.0 208.0"/>
</g>
<path d="M866.2 476.9C866.4 476.5 867.5 476.0 868.0 475.5C868.5 475.0 869.1 474.5 869.5 473.9C869.9 473.3 869.5 472.3 870.3 471.9C871.1 471.4 873.0 471.6 874.1 471.2C875.2 470.8 875.9 470.1 876.8 469.7C877.6 469.3 878.4 469.2 879.2 469.0C880.0 468.8 881.0 468.9 881.7 468.7C882.4 468.5 882.7 467.8 883.5 467.6C884.3 467.4 885.3 467.9 886.3 467.7C887.3 467.5 888.6 466.6 889.6 466.3C890.6 466.0 891.5 465.9 892.4 465.7C893.3 465.5 894.2 465.1 894.9 465.2C895.6 465.3 896.0 466.1 896.7 466.2C897.4 466.3 898.3 465.6 899.3 465.6C900.3 465.7 901.7 466.2 902.6 466.5C903.5 466.8 903.8 467.0 904.6 467.1C905.5 467.2 906.8 467.2 907.7 467.4C908.6 467.6 909.3 467.9 910.1 468.2C910.9 468.5 911.9 469.0 912.7 469.2C913.5 469.4 914.4 469.3 915.0 469.5C915.6 469.7 916.1 470.4 916.5 470.4C916.9 470.4 917.1 469.8 917.5 469.7C917.9 469.6 918.5 469.7 918.9 469.6C919.3 469.5 919.3 469.1 919.8 469.0C920.3 468.9 921.2 469.0 921.9 469.1C922.6 469.2 923.5 469.6 924.1 469.8C924.7 470.0 924.8 470.1 925.3 470.3C925.8 470.5 926.5 470.7 927.1 471.0C927.7 471.3 928.3 471.6 928.8 472.2C929.3 472.8 929.7 473.8 930.0 474.4C930.3 475.0 930.2 475.3 930.7 475.7C931.2 476.1 932.2 476.5 932.7 476.8C933.2 477.1 933.5 477.1 933.9 477.6C934.3 478.1 934.6 479.3 934.9 479.8C935.2 480.3 935.4 480.4 935.8 480.8C936.2 481.2 937.4 481.9 937.5 482.3C937.6 482.7 936.8 482.6 936.7 483.0C936.6 483.4 936.8 484.3 936.7 484.8C936.6 485.3 936.2 485.8 936.1 486.2C936.0 486.6 936.2 486.7 935.8 487.0C935.4 487.3 934.4 487.7 933.9 487.8C933.4 487.9 933.2 487.7 932.9 487.8C932.6 487.9 932.5 488.4 932.1 488.5C931.7 488.6 930.9 488.6 930.4 488.5C929.9 488.4 929.7 488.1 929.2 487.8C928.7 487.5 928.2 487.1 927.6 486.8C927.0 486.5 926.3 486.0 925.9 485.9C925.5 485.8 925.6 486.2 925.2 485.9C924.8 485.6 923.9 484.4 923.6 484.0C923.3 483.6 923.8 483.9 923.5 483.7C923.2 483.4 922.6 482.6 921.8 482.5C921.0 482.4 919.9 483.0 918.9 483.0C917.9 483.0 916.8 482.4 915.6 482.4C914.5 482.4 913.2 482.8 912.0 482.8C910.8 482.8 909.5 482.5 908.5 482.3C907.5 482.1 906.9 481.8 905.9 481.9C904.9 482.0 903.4 482.6 902.4 482.8C901.4 483.0 900.6 482.8 899.6 482.8C898.6 482.8 897.5 482.5 896.5 482.6C895.5 482.7 894.8 483.1 893.9 483.2C893.0 483.3 891.9 483.1 891.1 483.3C890.3 483.5 889.8 484.1 888.9 484.3C888.0 484.5 886.8 484.4 885.9 484.3C885.0 484.2 884.1 484.2 883.3 484.0C882.5 483.8 881.9 483.2 881.2 482.8C880.5 482.4 879.9 481.9 879.1 481.9C878.3 481.9 877.3 482.7 876.6 482.8C875.9 482.9 875.6 482.5 874.8 482.4C874.0 482.3 872.7 482.3 871.9 482.1C871.1 481.9 870.4 481.4 869.9 481.2C869.4 481.0 869.6 481.2 869.1 481.0C868.6 480.8 867.3 480.4 867.0 480.0C866.7 479.6 867.2 479.2 867.1 478.9C867.0 478.5 866.8 478.2 866.6 477.9C866.5 477.6 866.0 477.3 866.2 476.9Z" fill="none" stroke="#fff" stroke-width="4.1" stroke-linejoin="round"/>
<defs><filter id="halo" x="0" y="145" width="1620" height="891" filterUnits="userSpaceOnUse"><feMorphology in="SourceAlpha" operator="dilate" radius="1.3" result="d"/><feGaussianBlur in="d" stdDeviation="0.7" result="b"/><feFlood flood-color="#f0f0ec" flood-opacity="0.62"/><feComposite in2="b" operator="in" result="h"/><feGaussianBlur in="SourceGraphic" stdDeviation="0.42" result="s"/><feMerge><feMergeNode in="h"/><feMergeNode in="s"/></feMerge></filter></defs>
<g fill="#d8d8d4" stroke="#666" stroke-width="1">
<circle cx="239.5" cy="303.7" r="2.2"/>
<circle cx="93.7" cy="330.5" r="2.2"/>
<circle cx="243" cy="335.7" r="2.2"/>
<circle cx="327.5" cy="338" r="2.2"/>
<circle cx="265.5" cy="359" r="2.2"/>
<circle cx="193.7" cy="389.5" r="2.2"/>
<circle cx="332.5" cy="382.5" r="2.2"/>
<circle cx="433.7" cy="172" r="2.2"/>
<circle cx="793" cy="204" r="2.2"/>
<circle cx="947" cy="187" r="2.2"/>
<circle cx="969.5" cy="242" r="2.2"/>
<circle cx="893" cy="289.5" r="2.2"/>
<circle cx="998" cy="285.5" r="2.2"/>
<circle cx="984.5" cy="314.5" r="2.2"/>
<circle cx="775" cy="322.5" r="2.2"/>
<circle cx="366.7" cy="469.5" r="2.2"/>
<circle cx="341.7" cy="545.5" r="2.2"/>
<circle cx="390.5" cy="659.5" r="2.2"/>
<circle cx="543" cy="450.7" r="2.2"/>
<circle cx="512.5" cy="498.5" r="2.2"/>
<circle cx="737" cy="533.5" r="2.2"/>
<circle cx="827.5" cy="523" r="2.2"/>
<circle cx="906" cy="616.5" r="2.2"/>
<circle cx="1075.5" cy="607" r="2.2"/>
<circle cx="1449.5" cy="573" r="2.2"/>
<circle cx="545.5" cy="705.5" r="2.2"/>
<circle cx="610.7" cy="735.5" r="2.2"/>
<circle cx="688" cy="756.7" r="2.2"/>
<circle cx="939" cy="801" r="2.2"/>
</g><g fill="none" stroke="#444" stroke-width="1.1">
<circle cx="283.7" cy="401" r="3.3"/><circle cx="283.7" cy="401" r="1" fill="#444"/>
<circle cx="348" cy="458.5" r="3.3"/><circle cx="348" cy="458.5" r="1" fill="#444"/>
<circle cx="1267" cy="272.5" r="3.3"/><circle cx="1267" cy="272.5" r="1" fill="#444"/>
<circle cx="437.5" cy="682" r="3.3"/><circle cx="437.5" cy="682" r="1" fill="#444"/>
</g>
<g filter="url(#halo)" text-anchor="middle">
<text x="485.5" y="154.9" font-size="13.5" font-family="'DejaVu Sans','Liberation Sans',sans-serif" fill="#3a3e42" stroke="#3a3e42" stroke-width="0.5"  textLength="41.0" lengthAdjust="spacingAndGlyphs">Đà Lạt</text>
<text x="433.8" y="190.6" font-size="13.5" font-family="'DejaVu Sans','Liberation Sans',sans-serif" fill="#3a3e42" stroke="#3a3e42" stroke-width="0.5"  textLength="72.5" lengthAdjust="spacingAndGlyphs">Thành phố</text>
<text x="433.8" y="208.6" font-size="13.5" font-family="'DejaVu Sans','Liberation Sans',sans-serif" fill="#3a3e42" stroke="#3a3e42" stroke-width="0.5"  textLength="82.5" lengthAdjust="spacingAndGlyphs">Hồ Chí Minh</text>
<text x="239.2" y="298.9" font-size="13.5" font-family="'DejaVu Sans','Liberation Sans',sans-serif" fill="#3a3e42" stroke="#3a3e42" stroke-width="0.5"  textLength="47.5" lengthAdjust="spacingAndGlyphs">Kangar</text>
<text x="94.1" y="325.6" font-size="13.5" font-family="'DejaVu Sans','Liberation Sans',sans-serif" fill="#3a3e42" stroke="#3a3e42" stroke-width="0.5"  textLength="79.2" lengthAdjust="spacingAndGlyphs">Banda Aceh</text>
<text x="243.2" y="329.9" font-size="13.5" font-family="'DejaVu Sans','Liberation Sans',sans-serif" fill="#3a3e42" stroke="#3a3e42" stroke-width="0.5"  textLength="88.5" lengthAdjust="spacingAndGlyphs">George Town</text>
<text x="394.8" y="342.9" font-size="13.5" font-family="'DejaVu Sans','Liberation Sans',sans-serif" fill="#3a3e42" stroke="#3a3e42" stroke-width="0.5"  textLength="121.5" lengthAdjust="spacingAndGlyphs">Kuala Terengganu</text>
<text x="266.4" y="375.9" font-size="13.5" font-family="'DejaVu Sans','Liberation Sans',sans-serif" fill="#3a3e42" stroke="#3a3e42" stroke-width="0.5"  textLength="31.3" lengthAdjust="spacingAndGlyphs">Ipoh</text>
<text x="193.8" y="384.4" font-size="13.5" font-family="'DejaVu Sans','Liberation Sans',sans-serif" fill="#3a3e42" stroke="#3a3e42" stroke-width="0.5"  textLength="46.3" lengthAdjust="spacingAndGlyphs">Medan</text>
<text x="332.9" y="398.6" font-size="13.5" font-family="'DejaVu Sans','Liberation Sans',sans-serif" fill="#3a3e42" stroke="#3a3e42" stroke-width="0.5"  textLength="55.7" lengthAdjust="spacingAndGlyphs">Kuantan</text>
<text x="793.2" y="219.9" font-size="13.5" font-family="'DejaVu Sans','Liberation Sans',sans-serif" fill="#3a3e42" stroke="#3a3e42" stroke-width="0.5"  textLength="105.5" lengthAdjust="spacingAndGlyphs">Puerto Princesa</text>
<text x="947.8" y="182.9" font-size="13.5" font-family="'DejaVu Sans','Liberation Sans',sans-serif" fill="#3a3e42" stroke="#3a3e42" stroke-width="0.5"  textLength="63.5" lengthAdjust="spacingAndGlyphs">Cebu City</text>
<text x="969.5" y="220.4" font-size="13.5" font-family="'DejaVu Sans','Liberation Sans',sans-serif" fill="#3a3e42" stroke="#3a3e42" stroke-width="0.5"  textLength="57.0" lengthAdjust="spacingAndGlyphs">Cagayan</text>
<text x="970.0" y="237.9" font-size="13.5" font-family="'DejaVu Sans','Liberation Sans',sans-serif" fill="#3a3e42" stroke="#3a3e42" stroke-width="0.5"  textLength="45.0" lengthAdjust="spacingAndGlyphs">de Oro</text>
<text x="892.8" y="267.4" font-size="13.5" font-family="'DejaVu Sans','Liberation Sans',sans-serif" fill="#3a3e42" stroke="#3a3e42" stroke-width="0.5"  textLength="80.5" lengthAdjust="spacingAndGlyphs">Zamboanga</text>
<text x="892.9" y="284.9" font-size="13.5" font-family="'DejaVu Sans','Liberation Sans',sans-serif" fill="#3a3e42" stroke="#3a3e42" stroke-width="0.5"  textLength="24.3" lengthAdjust="spacingAndGlyphs">City</text>
<text x="998.5" y="280.6" font-size="13.5" font-family="'DejaVu Sans','Liberation Sans',sans-serif" fill="#3a3e42" stroke="#3a3e42" stroke-width="0.5"  textLength="71.0" lengthAdjust="spacingAndGlyphs">Davao City</text>
<text x="985.6" y="330.4" font-size="13.5" font-family="'DejaVu Sans','Liberation Sans',sans-serif" fill="#3a3e42" stroke="#3a3e42" stroke-width="0.5"  textLength="102.2" lengthAdjust="spacingAndGlyphs">General Santos</text>
<text x="813.0" y="327.9" font-size="13.5" font-family="'DejaVu Sans','Liberation Sans',sans-serif" fill="#3a3e42" stroke="#3a3e42" stroke-width="0.5"  textLength="66.0" lengthAdjust="spacingAndGlyphs">Sandakan</text>
<text x="1267.8" y="264.4" font-size="13.5" font-family="'DejaVu Sans','Liberation Sans',sans-serif" fill="#3a3e42" stroke="#3a3e42" stroke-width="0.5"  textLength="76.5" lengthAdjust="spacingAndGlyphs">Ngerulmud</text>
<text x="284.2" y="421.9" font-size="13.5" font-family="'DejaVu Sans','Liberation Sans',sans-serif" fill="#3a3e42" stroke="#3a3e42" stroke-width="0.5"  textLength="93.5" lengthAdjust="spacingAndGlyphs">Kuala Lumpur</text>
<text x="348.5" y="450.9" font-size="13.5" font-family="'DejaVu Sans','Liberation Sans',sans-serif" fill="#3a3e42" stroke="#3a3e42" stroke-width="0.5"  textLength="68.0" lengthAdjust="spacingAndGlyphs">Singapore</text>
<text x="367.0" y="488.9" font-size="13.5" font-family="'DejaVu Sans','Liberation Sans',sans-serif" fill="#3a3e42" stroke="#3a3e42" stroke-width="0.5"  textLength="100.0" lengthAdjust="spacingAndGlyphs">Tanjungpinang</text>
<text x="341.2" y="540.6" font-size="13.5" font-family="'DejaVu Sans','Liberation Sans',sans-serif" fill="#3a3e42" stroke="#3a3e42" stroke-width="0.5"  textLength="37.5" lengthAdjust="spacingAndGlyphs">Jambi</text>
<text x="391.0" y="654.9" font-size="13.5" font-family="'DejaVu Sans','Liberation Sans',sans-serif" fill="#3a3e42" stroke="#3a3e42" stroke-width="0.5"  textLength="117.0" lengthAdjust="spacingAndGlyphs">Bandar Lampung</text>
<text x="542.6" y="445.9" font-size="13.5" font-family="'DejaVu Sans','Liberation Sans',sans-serif" fill="#3a3e42" stroke="#3a3e42" stroke-width="0.5"  textLength="53.8" lengthAdjust="spacingAndGlyphs">Kuching</text>
<text x="512.0" y="492.6" font-size="13.5" font-family="'DejaVu Sans','Liberation Sans',sans-serif" fill="#3a3e42" stroke="#3a3e42" stroke-width="0.5"  textLength="68.0" lengthAdjust="spacingAndGlyphs">Pontianak</text>
<text x="737.2" y="550.6" font-size="13.5" font-family="'DejaVu Sans','Liberation Sans',sans-serif" fill="#3a3e42" stroke="#3a3e42" stroke-width="0.5"  textLength="74.5" lengthAdjust="spacingAndGlyphs">Balikpapan</text>
<text x="827.0" y="518.4" font-size="13.5" font-family="'DejaVu Sans','Liberation Sans',sans-serif" fill="#3a3e42" stroke="#3a3e42" stroke-width="0.5"  textLength="28.0" lengthAdjust="spacingAndGlyphs">Palu</text>
<text x="906.4" y="631.9" font-size="13.5" font-family="'DejaVu Sans','Liberation Sans',sans-serif" fill="#3a3e42" stroke="#3a3e42" stroke-width="0.5"  textLength="51.3" lengthAdjust="spacingAndGlyphs">Kendari</text>
<text x="1075.2" y="601.9" font-size="13.5" font-family="'DejaVu Sans','Liberation Sans',sans-serif" fill="#3a3e42" stroke="#3a3e42" stroke-width="0.5"  textLength="48.5" lengthAdjust="spacingAndGlyphs">Ambon</text>
<text x="1449.0" y="591.4" font-size="13.5" font-family="'DejaVu Sans','Liberation Sans',sans-serif" fill="#3a3e42" stroke="#3a3e42" stroke-width="0.5"  textLength="58.0" lengthAdjust="spacingAndGlyphs">Jayapura</text>
<text x="437.2" y="702.9" font-size="13.5" font-family="'DejaVu Sans','Liberation Sans',sans-serif" fill="#3a3e42" stroke="#3a3e42" stroke-width="0.5"  textLength="47.0" lengthAdjust="spacingAndGlyphs">Jakarta</text>
<text x="544.9" y="722.4" font-size="13.5" font-family="'DejaVu Sans','Liberation Sans',sans-serif" fill="#3a3e42" stroke="#3a3e42" stroke-width="0.5"  textLength="68.3" lengthAdjust="spacingAndGlyphs">Semarang</text>
<text x="611.0" y="752.4" font-size="13.5" font-family="'DejaVu Sans','Liberation Sans',sans-serif" fill="#3a3e42" stroke="#3a3e42" stroke-width="0.5"  textLength="50.0" lengthAdjust="spacingAndGlyphs">Malang</text>
<text x="688.2" y="750.9" font-size="13.5" font-family="'DejaVu Sans','Liberation Sans',sans-serif" fill="#3a3e42" stroke="#3a3e42" stroke-width="0.5"  textLength="64.5" lengthAdjust="spacingAndGlyphs">Denpasar</text>
<text x="938.0" y="818.6" font-size="13.5" font-family="'DejaVu Sans','Liberation Sans',sans-serif" fill="#3a3e42" stroke="#3a3e42" stroke-width="0.5"  textLength="50.0" lengthAdjust="spacingAndGlyphs">Kupang</text>
<text x="1643.8" y="799.6" font-size="13.5" font-family="'DejaVu Sans','Liberation Sans',sans-serif" fill="#3a3e42" stroke="#3a3e42" stroke-width="0.5" >Port Moresby</text>
<text x="130.0" y="385.8" font-size="13.2" font-family="'Liberation Sans',sans-serif" fill="#7d4a83" stroke="#7d4a83" stroke-width="0.35" font-style="italic" textLength="28.0" lengthAdjust="spacingAndGlyphs">Aceh</text>
<text x="197.2" y="443.8" font-size="13.2" font-family="'Liberation Sans',sans-serif" fill="#7d4a83" stroke="#7d4a83" stroke-width="0.35" font-style="italic" textLength="55.5" lengthAdjust="spacingAndGlyphs">Sumatera</text>
<text x="197.0" y="459.5" font-size="13.2" font-family="'Liberation Sans',sans-serif" fill="#7d4a83" stroke="#7d4a83" stroke-width="0.35" font-style="italic" textLength="32.0" lengthAdjust="spacingAndGlyphs">Utara</text>
<text x="283.5" y="470.5" font-size="13.2" font-family="'Liberation Sans',sans-serif" fill="#7d4a83" stroke="#7d4a83" stroke-width="0.35" font-style="italic" textLength="25.0" lengthAdjust="spacingAndGlyphs">Riau</text>
<text x="441.0" y="439.3" font-size="13.2" font-family="'Liberation Sans',sans-serif" fill="#7d4a83" stroke="#7d4a83" stroke-width="0.35" font-style="italic" textLength="62.0" lengthAdjust="spacingAndGlyphs">Kepulauan</text>
<text x="441.2" y="454.8" font-size="13.2" font-family="'Liberation Sans',sans-serif" fill="#7d4a83" stroke="#7d4a83" stroke-width="0.35" font-style="italic" textLength="25.0" lengthAdjust="spacingAndGlyphs">Riau</text>
<text x="236.8" y="538.8" font-size="13.2" font-family="'Liberation Sans',sans-serif" fill="#7d4a83" stroke="#7d4a83" stroke-width="0.35" font-style="italic" textLength="56.3" lengthAdjust="spacingAndGlyphs">Sumatera</text>
<text x="236.8" y="554.5" font-size="13.2" font-family="'Liberation Sans',sans-serif" fill="#7d4a83" stroke="#7d4a83" stroke-width="0.35" font-style="italic" textLength="31.5" lengthAdjust="spacingAndGlyphs">Barat</text>
<text x="365.2" y="590.8" font-size="13.2" font-family="'Liberation Sans',sans-serif" fill="#7d4a83" stroke="#7d4a83" stroke-width="0.35" font-style="italic" textLength="55.5" lengthAdjust="spacingAndGlyphs">Sumatera</text>
<text x="365.4" y="606.3" font-size="13.2" font-family="'Liberation Sans',sans-serif" fill="#7d4a83" stroke="#7d4a83" stroke-width="0.35" font-style="italic" textLength="43.3" lengthAdjust="spacingAndGlyphs">Selatan</text>
<text x="288.8" y="622.5" font-size="13.2" font-family="'Liberation Sans',sans-serif" fill="#7d4a83" stroke="#7d4a83" stroke-width="0.35" font-style="italic" textLength="53.5" lengthAdjust="spacingAndGlyphs">Bengkulu</text>
<text x="741.8" y="327.8" font-size="13.2" font-family="'Liberation Sans',sans-serif" fill="#7d4a83" stroke="#7d4a83" stroke-width="0.35" font-style="italic" textLength="35.5" lengthAdjust="spacingAndGlyphs">Sabah</text>
<text x="628.5" y="413.3" font-size="13.2" font-family="'Liberation Sans',sans-serif" fill="#7d4a83" stroke="#7d4a83" stroke-width="0.35" font-style="italic" textLength="49.0" lengthAdjust="spacingAndGlyphs">Sarawak</text>
<text x="739.0" y="412.5" font-size="13.2" font-family="'Liberation Sans',sans-serif" fill="#7d4a83" stroke="#7d4a83" stroke-width="0.35" font-style="italic" textLength="66.0" lengthAdjust="spacingAndGlyphs">Kalimantan</text>
<text x="739.0" y="427.5" font-size="13.2" font-family="'Liberation Sans',sans-serif" fill="#7d4a83" stroke="#7d4a83" stroke-width="0.35" font-style="italic" textLength="32.0" lengthAdjust="spacingAndGlyphs">Utara</text>
<text x="739.2" y="495.8" font-size="13.2" font-family="'Liberation Sans',sans-serif" fill="#7d4a83" stroke="#7d4a83" stroke-width="0.35" font-style="italic" textLength="66.5" lengthAdjust="spacingAndGlyphs">Kalimantan</text>
<text x="739.4" y="511.3" font-size="13.2" font-family="'Liberation Sans',sans-serif" fill="#7d4a83" stroke="#7d4a83" stroke-width="0.35" font-style="italic" textLength="32.7" lengthAdjust="spacingAndGlyphs">Timur</text>
<text x="530.0" y="530.5" font-size="13.2" font-family="'Liberation Sans',sans-serif" fill="#7d4a83" stroke="#7d4a83" stroke-width="0.35" font-style="italic" textLength="66.0" lengthAdjust="spacingAndGlyphs">Kalimantan</text>
<text x="530.2" y="545.8" font-size="13.2" font-family="'Liberation Sans',sans-serif" fill="#7d4a83" stroke="#7d4a83" stroke-width="0.35" font-style="italic" textLength="31.5" lengthAdjust="spacingAndGlyphs">Barat</text>
<text x="626.2" y="559.8" font-size="13.2" font-family="'Liberation Sans',sans-serif" fill="#7d4a83" stroke="#7d4a83" stroke-width="0.35" font-style="italic" textLength="66.5" lengthAdjust="spacingAndGlyphs">Kalimantan</text>
<text x="626.4" y="574.8" font-size="13.2" font-family="'Liberation Sans',sans-serif" fill="#7d4a83" stroke="#7d4a83" stroke-width="0.35" font-style="italic" textLength="41.3" lengthAdjust="spacingAndGlyphs">Tengah</text>
<text x="713.0" y="594.8" font-size="13.2" font-family="'Liberation Sans',sans-serif" fill="#7d4a83" stroke="#7d4a83" stroke-width="0.35" font-style="italic" textLength="66.0" lengthAdjust="spacingAndGlyphs">Kalimantan</text>
<text x="713.5" y="609.8" font-size="13.2" font-family="'Liberation Sans',sans-serif" fill="#7d4a83" stroke="#7d4a83" stroke-width="0.35" font-style="italic" textLength="43.0" lengthAdjust="spacingAndGlyphs">Selatan</text>
<text x="890.0" y="525.8" font-size="13.2" font-family="'Liberation Sans',sans-serif" fill="#7d4a83" stroke="#7d4a83" stroke-width="0.35" font-style="italic" textLength="50.0" lengthAdjust="spacingAndGlyphs">Sulawesi</text>
<text x="890.2" y="540.8" font-size="13.2" font-family="'Liberation Sans',sans-serif" fill="#7d4a83" stroke="#7d4a83" stroke-width="0.35" font-style="italic" textLength="40.5" lengthAdjust="spacingAndGlyphs">Tengah</text>
<text x="794.4" y="646.8" font-size="13.2" font-family="'Liberation Sans',sans-serif" fill="#7d4a83" stroke="#7d4a83" stroke-width="0.35" font-style="italic" textLength="48.7" lengthAdjust="spacingAndGlyphs">Sulawesi</text>
<text x="794.7" y="662.5" font-size="13.2" font-family="'Liberation Sans',sans-serif" fill="#7d4a83" stroke="#7d4a83" stroke-width="0.35" font-style="italic" textLength="42.0" lengthAdjust="spacingAndGlyphs">Selatan</text>
<text x="933.4" y="659.8" font-size="13.2" font-family="'Liberation Sans',sans-serif" fill="#7d4a83" stroke="#7d4a83" stroke-width="0.35" font-style="italic" textLength="49.3" lengthAdjust="spacingAndGlyphs">Sulawesi</text>
<text x="934.2" y="676.3" font-size="13.2" font-family="'Liberation Sans',sans-serif" fill="#7d4a83" stroke="#7d4a83" stroke-width="0.35" font-style="italic" textLength="53.5" lengthAdjust="spacingAndGlyphs">Tenggara</text>
<text x="1001.0" y="421.8" font-size="13.2" font-family="'Liberation Sans',sans-serif" fill="#7d4a83" stroke="#7d4a83" stroke-width="0.35" font-style="italic" textLength="50.0" lengthAdjust="spacingAndGlyphs">Sulawesi</text>
<text x="1001.9" y="438.3" font-size="13.2" font-family="'Liberation Sans',sans-serif" fill="#7d4a83" stroke="#7d4a83" stroke-width="0.35" font-style="italic" textLength="32.3" lengthAdjust="spacingAndGlyphs">Utara</text>
<text x="1063.2" y="482.8" font-size="13.2" font-family="'Liberation Sans',sans-serif" fill="#7d4a83" stroke="#7d4a83" stroke-width="0.35" font-style="italic" textLength="41.5" lengthAdjust="spacingAndGlyphs">Maluku</text>
<text x="1063.2" y="498.8" font-size="13.2" font-family="'Liberation Sans',sans-serif" fill="#7d4a83" stroke="#7d4a83" stroke-width="0.35" font-style="italic" textLength="32.5" lengthAdjust="spacingAndGlyphs">Utara</text>
<text x="1171.2" y="519.5" font-size="13.2" font-family="'Liberation Sans',sans-serif" fill="#7d4a83" stroke="#7d4a83" stroke-width="0.35" font-style="italic" textLength="72.5" lengthAdjust="spacingAndGlyphs">Papua Barat</text>
<text x="1171.2" y="535.5" font-size="13.2" font-family="'Liberation Sans',sans-serif" fill="#7d4a83" stroke="#7d4a83" stroke-width="0.35" font-style="italic" textLength="29.0" lengthAdjust="spacingAndGlyphs">Daya</text>
<text x="1242.3" y="566.8" font-size="13.2" font-family="'Liberation Sans',sans-serif" fill="#7d4a83" stroke="#7d4a83" stroke-width="0.35" font-style="italic" textLength="72.7" lengthAdjust="spacingAndGlyphs">Papua Barat</text>
<text x="1343.3" y="555.5" font-size="13.2" font-family="'Liberation Sans',sans-serif" fill="#7d4a83" stroke="#7d4a83" stroke-width="0.35" font-style="italic" textLength="36.7" lengthAdjust="spacingAndGlyphs">Papua</text>
<text x="1331.8" y="616.3" font-size="13.2" font-family="'Liberation Sans',sans-serif" fill="#7d4a83" stroke="#7d4a83" stroke-width="0.35" font-style="italic" textLength="81.5" lengthAdjust="spacingAndGlyphs">Papua Tengah</text>
<text x="1143.8" y="664.8" font-size="13.2" font-family="'Liberation Sans',sans-serif" fill="#7d4a83" stroke="#7d4a83" stroke-width="0.35" font-style="italic" textLength="42.5" lengthAdjust="spacingAndGlyphs">Maluku</text>
<text x="1542.3" y="609.5" font-size="13.2" font-family="'Liberation Sans',sans-serif" fill="#7d4a83" stroke="#7d4a83" stroke-width="0.35" font-style="italic" textLength="57.3" lengthAdjust="spacingAndGlyphs">East Sepik</text>
<text x="1616.5" y="630.8" font-size="13.2" font-family="'Liberation Sans',sans-serif" fill="#7d4a83" stroke="#7d4a83" stroke-width="0.35" font-style="italic">Madang</text>
<text x="1411.5" y="720.8" font-size="13.2" font-family="'Liberation Sans',sans-serif" fill="#7d4a83" stroke="#7d4a83" stroke-width="0.35" font-style="italic" textLength="83.0" lengthAdjust="spacingAndGlyphs">Papua Selatan</text>
<text x="1493.2" y="721.5" font-size="13.2" font-family="'Liberation Sans',sans-serif" fill="#7d4a83" stroke="#7d4a83" stroke-width="0.35" font-style="italic" textLength="45.5" lengthAdjust="spacingAndGlyphs">Western</text>
<text x="542.9" y="672.3" font-size="13.2" font-family="'Liberation Sans',sans-serif" fill="#7d4a83" stroke="#7d4a83" stroke-width="0.35" font-style="italic" textLength="74.3" lengthAdjust="spacingAndGlyphs">Jawa Tengah</text>
<text x="651.6" y="712.3" font-size="13.2" font-family="'Liberation Sans',sans-serif" fill="#7d4a83" stroke="#7d4a83" stroke-width="0.35" font-style="italic" textLength="65.8" lengthAdjust="spacingAndGlyphs">Jawa Timur</text>
<text x="879.0" y="763.8" font-size="13.2" font-family="'Liberation Sans',sans-serif" fill="#7d4a83" stroke="#7d4a83" stroke-width="0.35" font-style="italic" textLength="88.0" lengthAdjust="spacingAndGlyphs">Nusa Tenggara</text>
<text x="878.5" y="779.5" font-size="13.2" font-family="'Liberation Sans',sans-serif" fill="#7d4a83" stroke="#7d4a83" stroke-width="0.35" font-style="italic" textLength="33.0" lengthAdjust="spacingAndGlyphs">Timur</text>
<text x="282.5" y="507.2" font-size="14.5" font-family="'Liberation Sans',sans-serif" fill="#2a2a2a" stroke="#2a2a2a" stroke-width="0.35" font-style="italic" textLength="59.0" lengthAdjust="spacingAndGlyphs">Sumatra</text>
<text x="674.4" y="459.9" font-size="14.5" font-family="'Liberation Sans',sans-serif" fill="#2a2a2a" stroke="#2a2a2a" stroke-width="0.35" font-style="italic" textLength="48.7" lengthAdjust="spacingAndGlyphs">Borneo</text>
<text x="839.4" y="562.2" font-size="14.5" font-family="'Liberation Sans',sans-serif" fill="#2a2a2a" stroke="#2a2a2a" stroke-width="0.35" font-style="italic" textLength="48.7" lengthAdjust="spacingAndGlyphs">Sulawesi</text>
<text x="1492.0" y="670.7" font-size="14.5" font-family="'Liberation Sans',sans-serif" fill="#2a2a2a" stroke="#2a2a2a" stroke-width="0.35" font-style="italic" textLength="82.0" lengthAdjust="spacingAndGlyphs">New Guinea</text>
<text x="665.2" y="365.3" font-size="16" font-family="'DejaVu Sans','Liberation Sans',sans-serif" fill="#693a6f" stroke="#693a6f" stroke-width="0.2"  textLength="51.5" lengthAdjust="spacingAndGlyphs">Brunei</text>
<text x="779.2" y="376.5" font-size="16" font-family="'DejaVu Sans','Liberation Sans',sans-serif" fill="#693a6f" stroke="#693a6f" stroke-width="0.2"  textLength="67.5" lengthAdjust="spacingAndGlyphs">Malaysia</text>
<text x="836.9" y="577.9" font-size="16.5" font-family="'DejaVu Sans','Liberation Sans',sans-serif" fill="#693a6f" stroke="#693a6f" stroke-width="0.2"  textLength="77.7" lengthAdjust="spacingAndGlyphs">Indonesia</text>
<text x="1011.8" y="768.8" font-size="16" font-family="'DejaVu Sans','Liberation Sans',sans-serif" fill="#693a6f" stroke="#693a6f" stroke-width="0.2"  textLength="92.5" lengthAdjust="spacingAndGlyphs">Timor-Leste</text>
<text x="1226.2" y="323.8" font-size="16" font-family="'DejaVu Sans','Liberation Sans',sans-serif" fill="#693a6f" stroke="#693a6f" stroke-width="0.2"  textLength="43.5" lengthAdjust="spacingAndGlyphs">Belau</text>
<text x="1617.0" y="689.4" font-size="16.5" font-family="'DejaVu Sans','Liberation Sans',sans-serif" fill="#693a6f" stroke="#693a6f" stroke-width="0.2" >Papua Niugini</text>
</g>
</svg>
<div class="ctl" style="top:8px;height:51px"><i><svg class="abs" style="left:0;top:0" width="22" height="22" viewBox="0 0 22 22"><circle cx="9.4" cy="9.8" r="6.3" fill="#fff"/><path d="M13.700 14.300 18.400 18.500" stroke="#fff" stroke-width="1.700" stroke-linecap="round"/><path d="M6.500 9.800h5.800M9.400 6.900v5.800" stroke="#5d79b3" stroke-width="1.100" fill="none"/></svg></i><i><svg class="abs" style="left:0;top:0" width="22" height="22" viewBox="0 0 22 22"><circle cx="9.4" cy="9.8" r="6.3" fill="#fff"/><path d="M13.700 14.300 18.400 18.500" stroke="#fff" stroke-width="1.700" stroke-linecap="round"/><path d="M6.500 9.800h5.800" stroke="#5d79b3" stroke-width="1.100" fill="none"/></svg></i></div>
<div class="ctl" style="top:64px;height:28px"><i><svg class="abs" style="left:0;top:0" width="22" height="22" viewBox="0 0 22 22"><circle cx="9.4" cy="9.8" r="6.3" fill="#fff"/><path d="M13.700 14.300 18.400 18.500" stroke="#fff" stroke-width="1.700" stroke-linecap="round"/><path d="M9.400 13.200c-1.300-1.900-2.200-3-2.200-4.100a2.200 2.200 0 0 1 4.400 0c0 1.100-.9 2.200-2.200 4.100z" stroke="#5d79b3" stroke-width="1" fill="none"/></svg></i></div>
<div id="scale"><div>1000 km</div></div>
<div id="attr">© <a>OpenStreetMap</a> contributors.</div>
</div>
<div id="side">
<div id="lh"><span>Layers</span><svg class="abs" style="left:243.500px;top:14.500px" width="13" height="13" viewBox="0 0 14 14" fill="none" stroke="#16181b" stroke-width="2" stroke-linecap="round"><path d="M7 1v12M1 7h12"/></svg><svg class="abs" style="left:269px;top:14px" width="15" height="14" viewBox="0 0 15 14" fill="none" stroke="#16181b" stroke-width="1.700" stroke-linecap="round" stroke-linejoin="round"><path d="M2 1.500 7 7 2 12.500M8 1.500 13 7 8 12.500"/></svg></div>
<div class="row" style="top:42px"><svg class="abs" style="left:16.5px;top:11.5px" width="19.46" height="17.3" viewBox="0 0 576 512" fill="#555" ><path d="M0 80C0 53.5 21.5 32 48 32l96 0c26.5 0 48 21.5 48 48l0 16 192 0 0-16c0-26.5 21.5-48 48-48l96 0c26.5 0 48 21.5 48 48l0 96c0 26.5-21.5 48-48 48l-96 0c-26.5 0-48-21.5-48-48l0-16-192 0 0 16c0 1.7-.1 3.4-.3 5L272 288l96 0c26.5 0 48 21.5 48 48l0 96c0 26.5-21.5 48-48 48l-96 0c-26.5 0-48-21.5-48-48l0-96c0-1.7 .1-3.4 .3-5L144 224l-96 0c-26.5 0-48-21.5-48-48L0 80z"></path></svg><span style="letter-spacing:-0.267px">KBA</span><svg class="abs" style="left:264px;top:12px" width="20.00" height="16" viewBox="0 0 640 512" fill="#212529" ><path d="M38.8 5.1C28.4-3.1 13.3-1.2 5.1 9.2S-1.2 34.7 9.2 42.9l592 464c10.4 8.2 25.5 6.3 33.7-4.1s6.3-25.5-4.1-33.7L525.6 386.7c39.6-40.6 66.4-86.1 79.9-118.4c3.3-7.9 3.3-16.7 0-24.6c-14.9-35.7-46.2-87.7-93-131.1C465.5 68.8 400.8 32 320 32c-68.2 0-125 26.3-169.3 60.8L38.8 5.1zM223.1 149.5C248.6 126.2 282.7 112 320 112c79.5 0 144 64.5 144 144c0 24.9-6.3 48.3-17.4 68.7L408 294.5c8.4-19.3 10.6-41.4 4.8-63.3c-11.1-41.5-47.8-69.4-88.6-71.1c-5.8-.2-9.2 6.1-7.4 11.7c2.1 6.4 3.3 13.2 3.3 20.3c0 10.2-2.4 19.8-6.6 28.3l-90.3-70.8zM373 389.9c-16.4 6.5-34.3 10.1-53 10.1c-79.5 0-144-64.5-144-144c0-6.9 .5-13.6 1.4-20.2L83.1 161.5C60.3 191.2 44 220.8 34.5 243.7c-3.3 7.9-3.3 16.7 0 24.6c14.9 35.7 46.2 87.7 93 131.1C174.5 443.2 239.2 480 320 480c47.8 0 89.9-12.9 126.2-32.5L373 389.9z"></path></svg></div>
<div class="row" style="top:82px"><svg class="abs" style="left:16.5px;top:11.5px" width="19.46" height="17.3" viewBox="0 0 576 512" fill="#555" ><path d="M0 80C0 53.5 21.5 32 48 32l96 0c26.5 0 48 21.5 48 48l0 16 192 0 0-16c0-26.5 21.5-48 48-48l96 0c26.5 0 48 21.5 48 48l0 96c0 26.5-21.5 48-48 48l-96 0c-26.5 0-48-21.5-48-48l0-16-192 0 0 16c0 1.7-.1 3.4-.3 5L272 288l96 0c26.5 0 48 21.5 48 48l0 96c0 26.5-21.5 48-48 48l-96 0c-26.5 0-48-21.5-48-48l0-96c0-1.7 .1-3.4 .3-5L144 224l-96 0c-26.5 0-48-21.5-48-48L0 80z"></path></svg><span style="letter-spacing:0.146px">Land Use 2020</span><svg class="abs" style="left:264px;top:12px" width="20.00" height="16" viewBox="0 0 640 512" fill="#212529" ><path d="M38.8 5.1C28.4-3.1 13.3-1.2 5.1 9.2S-1.2 34.7 9.2 42.9l592 464c10.4 8.2 25.5 6.3 33.7-4.1s6.3-25.5-4.1-33.7L525.6 386.7c39.6-40.6 66.4-86.1 79.9-118.4c3.3-7.9 3.3-16.7 0-24.6c-14.9-35.7-46.2-87.7-93-131.1C465.5 68.8 400.8 32 320 32c-68.2 0-125 26.3-169.3 60.8L38.8 5.1zM223.1 149.5C248.6 126.2 282.7 112 320 112c79.5 0 144 64.5 144 144c0 24.9-6.3 48.3-17.4 68.7L408 294.5c8.4-19.3 10.6-41.4 4.8-63.3c-11.1-41.5-47.8-69.4-88.6-71.1c-5.8-.2-9.2 6.1-7.4 11.7c2.1 6.4 3.3 13.2 3.3 20.3c0 10.2-2.4 19.8-6.6 28.3l-90.3-70.8zM373 389.9c-16.4 6.5-34.3 10.1-53 10.1c-79.5 0-144-64.5-144-144c0-6.9 .5-13.6 1.4-20.2L83.1 161.5C60.3 191.2 44 220.8 34.5 243.7c-3.3 7.9-3.3 16.7 0 24.6c14.9 35.7 46.2 87.7 93 131.1C174.5 443.2 239.2 480 320 480c47.8 0 89.9-12.9 126.2-32.5L373 389.9z"></path></svg></div>
<div class="row" style="top:122px"><svg class="abs" style="left:16.5px;top:11.5px" width="19.46" height="17.3" viewBox="0 0 576 512" fill="#555" ><path d="M0 80C0 53.5 21.5 32 48 32l96 0c26.5 0 48 21.5 48 48l0 16 192 0 0-16c0-26.5 21.5-48 48-48l96 0c26.5 0 48 21.5 48 48l0 96c0 26.5-21.5 48-48 48l-96 0c-26.5 0-48-21.5-48-48l0-16-192 0 0 16c0 1.7-.1 3.4-.3 5L272 288l96 0c26.5 0 48 21.5 48 48l0 96c0 26.5-21.5 48-48 48l-96 0c-26.5 0-48-21.5-48-48l0-96c0-1.7 .1-3.4 .3-5L144 224l-96 0c-26.5 0-48-21.5-48-48L0 80z"></path></svg><span style="letter-spacing:0.208px">Land Use 2000</span><svg class="abs" style="left:264px;top:12px" width="20.00" height="16" viewBox="0 0 640 512" fill="#212529" ><path d="M38.8 5.1C28.4-3.1 13.3-1.2 5.1 9.2S-1.2 34.7 9.2 42.9l592 464c10.4 8.2 25.5 6.3 33.7-4.1s6.3-25.5-4.1-33.7L525.6 386.7c39.6-40.6 66.4-86.1 79.9-118.4c3.3-7.9 3.3-16.7 0-24.6c-14.9-35.7-46.2-87.7-93-131.1C465.5 68.8 400.8 32 320 32c-68.2 0-125 26.3-169.3 60.8L38.8 5.1zM223.1 149.5C248.6 126.2 282.7 112 320 112c79.5 0 144 64.5 144 144c0 24.9-6.3 48.3-17.4 68.7L408 294.5c8.4-19.3 10.6-41.4 4.8-63.3c-11.1-41.5-47.8-69.4-88.6-71.1c-5.8-.2-9.2 6.1-7.4 11.7c2.1 6.4 3.3 13.2 3.3 20.3c0 10.2-2.4 19.8-6.6 28.3l-90.3-70.8zM373 389.9c-16.4 6.5-34.3 10.1-53 10.1c-79.5 0-144-64.5-144-144c0-6.9 .5-13.6 1.4-20.2L83.1 161.5C60.3 191.2 44 220.8 34.5 243.7c-3.3 7.9-3.3 16.7 0 24.6c14.9 35.7 46.2 87.7 93 131.1C174.5 443.2 239.2 480 320 480c47.8 0 89.9-12.9 126.2-32.5L373 389.9z"></path></svg></div>
<div class="row" style="top:162px"><svg class="abs" style="left:16.5px;top:11.5px" width="19.46" height="17.3" viewBox="0 0 576 512" fill="#555" ><path d="M0 80C0 53.5 21.5 32 48 32l96 0c26.5 0 48 21.5 48 48l0 16 192 0 0-16c0-26.5 21.5-48 48-48l96 0c26.5 0 48 21.5 48 48l0 96c0 26.5-21.5 48-48 48l-96 0c-26.5 0-48-21.5-48-48l0-16-192 0 0 16c0 1.7-.1 3.4-.3 5L272 288l96 0c26.5 0 48 21.5 48 48l0 96c0 26.5-21.5 48-48 48l-96 0c-26.5 0-48-21.5-48-48l0-96c0-1.7 .1-3.4 .3-5L144 224l-96 0c-26.5 0-48-21.5-48-48L0 80z"></path></svg><span style="letter-spacing:0.108px">Oil Palm 2000</span><svg class="abs" style="left:264px;top:12px" width="20.00" height="16" viewBox="0 0 640 512" fill="#212529" ><path d="M38.8 5.1C28.4-3.1 13.3-1.2 5.1 9.2S-1.2 34.7 9.2 42.9l592 464c10.4 8.2 25.5 6.3 33.7-4.1s6.3-25.5-4.1-33.7L525.6 386.7c39.6-40.6 66.4-86.1 79.9-118.4c3.3-7.9 3.3-16.7 0-24.6c-14.9-35.7-46.2-87.7-93-131.1C465.5 68.8 400.8 32 320 32c-68.2 0-125 26.3-169.3 60.8L38.8 5.1zM223.1 149.5C248.6 126.2 282.7 112 320 112c79.5 0 144 64.5 144 144c0 24.9-6.3 48.3-17.4 68.7L408 294.5c8.4-19.3 10.6-41.4 4.8-63.3c-11.1-41.5-47.8-69.4-88.6-71.1c-5.8-.2-9.2 6.1-7.4 11.7c2.1 6.4 3.3 13.2 3.3 20.3c0 10.2-2.4 19.8-6.6 28.3l-90.3-70.8zM373 389.9c-16.4 6.5-34.3 10.1-53 10.1c-79.5 0-144-64.5-144-144c0-6.9 .5-13.6 1.4-20.2L83.1 161.5C60.3 191.2 44 220.8 34.5 243.7c-3.3 7.9-3.3 16.7 0 24.6c14.9 35.7 46.2 87.7 93 131.1C174.5 443.2 239.2 480 320 480c47.8 0 89.9-12.9 126.2-32.5L373 389.9z"></path></svg></div>
<div class="row" style="top:202px"><svg class="abs" style="left:16.5px;top:11.5px" width="19.46" height="17.3" viewBox="0 0 576 512" fill="#555" ><path d="M0 80C0 53.5 21.5 32 48 32l96 0c26.5 0 48 21.5 48 48l0 16 192 0 0-16c0-26.5 21.5-48 48-48l96 0c26.5 0 48 21.5 48 48l0 96c0 26.5-21.5 48-48 48l-96 0c-26.5 0-48-21.5-48-48l0-16-192 0 0 16c0 1.7-.1 3.4-.3 5L272 288l96 0c26.5 0 48 21.5 48 48l0 96c0 26.5-21.5 48-48 48l-96 0c-26.5 0-48-21.5-48-48l0-96c0-1.7 .1-3.4 .3-5L144 224l-96 0c-26.5 0-48-21.5-48-48L0 80z"></path></svg><span style="letter-spacing:0.282px">New Oil Palm 2000-2020</span><svg class="abs" style="left:264px;top:12px" width="20.00" height="16" viewBox="0 0 640 512" fill="#212529" ><path d="M38.8 5.1C28.4-3.1 13.3-1.2 5.1 9.2S-1.2 34.7 9.2 42.9l592 464c10.4 8.2 25.5 6.3 33.7-4.1s6.3-25.5-4.1-33.7L525.6 386.7c39.6-40.6 66.4-86.1 79.9-118.4c3.3-7.9 3.3-16.7 0-24.6c-14.9-35.7-46.2-87.7-93-131.1C465.5 68.8 400.8 32 320 32c-68.2 0-125 26.3-169.3 60.8L38.8 5.1zM223.1 149.5C248.6 126.2 282.7 112 320 112c79.5 0 144 64.5 144 144c0 24.9-6.3 48.3-17.4 68.7L408 294.5c8.4-19.3 10.6-41.4 4.8-63.3c-11.1-41.5-47.8-69.4-88.6-71.1c-5.8-.2-9.2 6.1-7.4 11.7c2.1 6.4 3.3 13.2 3.3 20.3c0 10.2-2.4 19.8-6.6 28.3l-90.3-70.8zM373 389.9c-16.4 6.5-34.3 10.1-53 10.1c-79.5 0-144-64.5-144-144c0-6.9 .5-13.6 1.4-20.2L83.1 161.5C60.3 191.2 44 220.8 34.5 243.7c-3.3 7.9-3.3 16.7 0 24.6c14.9 35.7 46.2 87.7 93 131.1C174.5 443.2 239.2 480 320 480c47.8 0 89.9-12.9 126.2-32.5L373 389.9z"></path></svg></div>
<div class="row" style="top:242px"><svg class="abs" style="left:16.5px;top:11.5px" width="19.46" height="17.3" viewBox="0 0 576 512" fill="#555" ><path d="M0 80C0 53.5 21.5 32 48 32l96 0c26.5 0 48 21.5 48 48l0 16 192 0 0-16c0-26.5 21.5-48 48-48l96 0c26.5 0 48 21.5 48 48l0 96c0 26.5-21.5 48-48 48l-96 0c-26.5 0-48-21.5-48-48l0-16-192 0 0 16c0 1.7-.1 3.4-.3 5L272 288l96 0c26.5 0 48 21.5 48 48l0 96c0 26.5-21.5 48-48 48l-96 0c-26.5 0-48-21.5-48-48l0-96c0-1.7 .1-3.4 .3-5L144 224l-96 0c-26.5 0-48-21.5-48-48L0 80z"></path></svg><span style="letter-spacing:0.069px">Oil Palm 2020</span><svg class="abs" style="left:264px;top:12px" width="20.00" height="16" viewBox="0 0 640 512" fill="#212529" ><path d="M38.8 5.1C28.4-3.1 13.3-1.2 5.1 9.2S-1.2 34.7 9.2 42.9l592 464c10.4 8.2 25.5 6.3 33.7-4.1s6.3-25.5-4.1-33.7L525.6 386.7c39.6-40.6 66.4-86.1 79.9-118.4c3.3-7.9 3.3-16.7 0-24.6c-14.9-35.7-46.2-87.7-93-131.1C465.5 68.8 400.8 32 320 32c-68.2 0-125 26.3-169.3 60.8L38.8 5.1zM223.1 149.5C248.6 126.2 282.7 112 320 112c79.5 0 144 64.5 144 144c0 24.9-6.3 48.3-17.4 68.7L408 294.5c8.4-19.3 10.6-41.4 4.8-63.3c-11.1-41.5-47.8-69.4-88.6-71.1c-5.8-.2-9.2 6.1-7.4 11.7c2.1 6.4 3.3 13.2 3.3 20.3c0 10.2-2.4 19.8-6.6 28.3l-90.3-70.8zM373 389.9c-16.4 6.5-34.3 10.1-53 10.1c-79.5 0-144-64.5-144-144c0-6.9 .5-13.6 1.4-20.2L83.1 161.5C60.3 191.2 44 220.8 34.5 243.7c-3.3 7.9-3.3 16.7 0 24.6c14.9 35.7 46.2 87.7 93 131.1C174.5 443.2 239.2 480 320 480c47.8 0 89.9-12.9 126.2-32.5L373 389.9z"></path></svg></div>
<div class="row" style="top:282px"><svg class="abs" style="left:16.5px;top:11.5px" width="19.46" height="17.3" viewBox="0 0 576 512" fill="#555" ><path d="M0 80C0 53.5 21.5 32 48 32l96 0c26.5 0 48 21.5 48 48l0 16 192 0 0-16c0-26.5 21.5-48 48-48l96 0c26.5 0 48 21.5 48 48l0 96c0 26.5-21.5 48-48 48l-96 0c-26.5 0-48-21.5-48-48l0-16-192 0 0 16c0 1.7-.1 3.4-.3 5L272 288l96 0c26.5 0 48 21.5 48 48l0 96c0 26.5-21.5 48-48 48l-96 0c-26.5 0-48-21.5-48-48l0-96c0-1.7 .1-3.4 .3-5L144 224l-96 0c-26.5 0-48-21.5-48-48L0 80z"></path></svg><span style="letter-spacing:0.296px">Decline in BHI (2000-2020)</span><svg class="abs" style="left:264px;top:12px" width="20.00" height="16" viewBox="0 0 640 512" fill="#212529" ><path d="M38.8 5.1C28.4-3.1 13.3-1.2 5.1 9.2S-1.2 34.7 9.2 42.9l592 464c10.4 8.2 25.5 6.3 33.7-4.1s6.3-25.5-4.1-33.7L525.6 386.7c39.6-40.6 66.4-86.1 79.9-118.4c3.3-7.9 3.3-16.7 0-24.6c-14.9-35.7-46.2-87.7-93-131.1C465.5 68.8 400.8 32 320 32c-68.2 0-125 26.3-169.3 60.8L38.8 5.1zM223.1 149.5C248.6 126.2 282.7 112 320 112c79.5 0 144 64.5 144 144c0 24.9-6.3 48.3-17.4 68.7L408 294.5c8.4-19.3 10.6-41.4 4.8-63.3c-11.1-41.5-47.8-69.4-88.6-71.1c-5.8-.2-9.2 6.1-7.4 11.7c2.1 6.4 3.3 13.2 3.3 20.3c0 10.2-2.4 19.8-6.6 28.3l-90.3-70.8zM373 389.9c-16.4 6.5-34.3 10.1-53 10.1c-79.5 0-144-64.5-144-144c0-6.9 .5-13.6 1.4-20.2L83.1 161.5C60.3 191.2 44 220.8 34.5 243.7c-3.3 7.9-3.3 16.7 0 24.6c14.9 35.7 46.2 87.7 93 131.1C174.5 443.2 239.2 480 320 480c47.8 0 89.9-12.9 126.2-32.5L373 389.9z"></path></svg></div>
<div class="row" style="top:322px"><svg class="abs" style="left:16.5px;top:11.5px" width="19.46" height="17.3" viewBox="0 0 576 512" fill="#555" ><path d="M0 80C0 53.5 21.5 32 48 32l96 0c26.5 0 48 21.5 48 48l0 16 192 0 0-16c0-26.5 21.5-48 48-48l96 0c26.5 0 48 21.5 48 48l0 96c0 26.5-21.5 48-48 48l-96 0c-26.5 0-48-21.5-48-48l0-16-192 0 0 16c0 1.7-.1 3.4-.3 5L272 288l96 0c26.5 0 48 21.5 48 48l0 96c0 26.5-21.5 48-48 48l-96 0c-26.5 0-48-21.5-48-48l0-96c0-1.7 .1-3.4 .3-5L144 224l-96 0c-26.5 0-48-21.5-48-48L0 80z"></path></svg><span style="letter-spacing:0.125px">BHI 2020</span><svg class="abs" style="left:264px;top:12px" width="20.00" height="16" viewBox="0 0 640 512" fill="#212529" ><path d="M38.8 5.1C28.4-3.1 13.3-1.2 5.1 9.2S-1.2 34.7 9.2 42.9l592 464c10.4 8.2 25.5 6.3 33.7-4.1s6.3-25.5-4.1-33.7L525.6 386.7c39.6-40.6 66.4-86.1 79.9-118.4c3.3-7.9 3.3-16.7 0-24.6c-14.9-35.7-46.2-87.7-93-131.1C465.5 68.8 400.8 32 320 32c-68.2 0-125 26.3-169.3 60.8L38.8 5.1zM223.1 149.5C248.6 126.2 282.7 112 320 112c79.5 0 144 64.5 144 144c0 24.9-6.3 48.3-17.4 68.7L408 294.5c8.4-19.3 10.6-41.4 4.8-63.3c-11.1-41.5-47.8-69.4-88.6-71.1c-5.8-.2-9.2 6.1-7.4 11.7c2.1 6.4 3.3 13.2 3.3 20.3c0 10.2-2.4 19.8-6.6 28.3l-90.3-70.8zM373 389.9c-16.4 6.5-34.3 10.1-53 10.1c-79.5 0-144-64.5-144-144c0-6.9 .5-13.6 1.4-20.2L83.1 161.5C60.3 191.2 44 220.8 34.5 243.7c-3.3 7.9-3.3 16.7 0 24.6c14.9 35.7 46.2 87.7 93 131.1C174.5 443.2 239.2 480 320 480c47.8 0 89.9-12.9 126.2-32.5L373 389.9z"></path></svg></div>
<div class="row" style="top:362px"><svg class="abs" style="left:16.5px;top:11.5px" width="19.46" height="17.3" viewBox="0 0 576 512" fill="#555" ><path d="M0 80C0 53.5 21.5 32 48 32l96 0c26.5 0 48 21.5 48 48l0 16 192 0 0-16c0-26.5 21.5-48 48-48l96 0c26.5 0 48 21.5 48 48l0 96c0 26.5-21.5 48-48 48l-96 0c-26.5 0-48-21.5-48-48l0-16-192 0 0 16c0 1.7-.1 3.4-.3 5L272 288l96 0c26.5 0 48 21.5 48 48l0 96c0 26.5-21.5 48-48 48l-96 0c-26.5 0-48-21.5-48-48l0-96c0-1.7 .1-3.4 .3-5L144 224l-96 0c-26.5 0-48-21.5-48-48L0 80z"></path></svg><span style="letter-spacing:0.188px">BHI 2000</span><svg class="abs" style="left:264px;top:12px" width="20.00" height="16" viewBox="0 0 640 512" fill="#212529" ><path d="M38.8 5.1C28.4-3.1 13.3-1.2 5.1 9.2S-1.2 34.7 9.2 42.9l592 464c10.4 8.2 25.5 6.3 33.7-4.1s6.3-25.5-4.1-33.7L525.6 386.7c39.6-40.6 66.4-86.1 79.9-118.4c3.3-7.9 3.3-16.7 0-24.6c-14.9-35.7-46.2-87.7-93-131.1C465.5 68.8 400.8 32 320 32c-68.2 0-125 26.3-169.3 60.8L38.8 5.1zM223.1 149.5C248.6 126.2 282.7 112 320 112c79.5 0 144 64.5 144 144c0 24.9-6.3 48.3-17.4 68.7L408 294.5c8.4-19.3 10.6-41.4 4.8-63.3c-11.1-41.5-47.8-69.4-88.6-71.1c-5.8-.2-9.2 6.1-7.4 11.7c2.1 6.4 3.3 13.2 3.3 20.3c0 10.2-2.4 19.8-6.6 28.3l-90.3-70.8zM373 389.9c-16.4 6.5-34.3 10.1-53 10.1c-79.5 0-144-64.5-144-144c0-6.9 .5-13.6 1.4-20.2L83.1 161.5C60.3 191.2 44 220.8 34.5 243.7c-3.3 7.9-3.3 16.7 0 24.6c14.9 35.7 46.2 87.7 93 131.1C174.5 443.2 239.2 480 320 480c47.8 0 89.9-12.9 126.2-32.5L373 389.9z"></path></svg></div>
<div class="row" style="top:402px"><svg class="abs" style="left:16.5px;top:11.5px" width="19.46" height="17.3" viewBox="0 0 576 512" fill="#555" ><path d="M0 80C0 53.5 21.5 32 48 32l96 0c26.5 0 48 21.5 48 48l0 16 192 0 0-16c0-26.5 21.5-48 48-48l96 0c26.5 0 48 21.5 48 48l0 96c0 26.5-21.5 48-48 48l-96 0c-26.5 0-48-21.5-48-48l0-16-192 0 0 16c0 1.7-.1 3.4-.3 5L272 288l96 0c26.5 0 48 21.5 48 48l0 96c0 26.5-21.5 48-48 48l-96 0c-26.5 0-48-21.5-48-48l0-96c0-1.7 .1-3.4 .3-5L144 224l-96 0c-26.5 0-48-21.5-48-48L0 80z"></path></svg><span style="letter-spacing:0.056px">Gorontalo Province</span><svg class="abs" style="left:264px;top:12px" width="20.00" height="16" viewBox="0 0 640 512" fill="#212529" ><path d="M38.8 5.1C28.4-3.1 13.3-1.2 5.1 9.2S-1.2 34.7 9.2 42.9l592 464c10.4 8.2 25.5 6.3 33.7-4.1s6.3-25.5-4.1-33.7L525.6 386.7c39.6-40.6 66.4-86.1 79.9-118.4c3.3-7.9 3.3-16.7 0-24.6c-14.9-35.7-46.2-87.7-93-131.1C465.5 68.8 400.8 32 320 32c-68.2 0-125 26.3-169.3 60.8L38.8 5.1zM223.1 149.5C248.6 126.2 282.7 112 320 112c79.5 0 144 64.5 144 144c0 24.9-6.3 48.3-17.4 68.7L408 294.5c8.4-19.3 10.6-41.4 4.8-63.3c-11.1-41.5-47.8-69.4-88.6-71.1c-5.8-.2-9.2 6.1-7.4 11.7c2.1 6.4 3.3 13.2 3.3 20.3c0 10.2-2.4 19.8-6.6 28.3l-90.3-70.8zM373 389.9c-16.4 6.5-34.3 10.1-53 10.1c-79.5 0-144-64.5-144-144c0-6.9 .5-13.6 1.4-20.2L83.1 161.5C60.3 191.2 44 220.8 34.5 243.7c-3.3 7.9-3.3 16.7 0 24.6c14.9 35.7 46.2 87.7 93 131.1C174.5 443.2 239.2 480 320 480c47.8 0 89.9-12.9 126.2-32.5L373 389.9z"></path></svg></div>
<div class="row sel" style="top:442px"><svg class="abs" style="left:18px;top:12px" width="16.00" height="16" viewBox="0 0 512 512" fill="#4a4a4a" ><path d="M464 448H48c-26.51 0-48-21.49-48-48V112c0-26.51 21.49-48 48-48h416c26.51 0 48 21.49 48 48v288c0 26.51-21.49 48-48 48zM112 120c-30.928 0-56 25.072-56 56s25.072 56 56 56 56-25.072 56-56-25.072-56-56-56zM64 384h384V272l-87.515-87.515c-4.686-4.686-12.284-4.686-16.971 0L208 320l-55.515-55.515c-4.686-4.686-12.284-4.686-16.971 0L64 336v48z"></path></svg><span style="letter-spacing:-0.069px">OpenStreetMap</span><svg class="abs" style="left:265px;top:12px" width="18.00" height="16" viewBox="0 0 576 512" fill="#fff" ><path d="M572.52 241.4C518.29 135.59 410.93 64 288 64S57.68 135.64 3.48 241.41a32.35 32.35 0 0 0 0 29.19C57.71 376.41 165.07 448 288 448s230.32-71.64 284.52-177.41a32.35 32.35 0 0 0 0-29.19zM288 400a144 144 0 1 1 144-144 143.93 143.93 0 0 1-144 144zm0-240a95.31 95.31 0 0 0-25.31 3.79 47.85 47.85 0 0 1-66.9 66.9A95.78 95.78 0 1 0 288 160z"></path></svg></div>
<div class="row" style="top:482px"><svg class="abs" style="left:17px;top:12px" width="18.00" height="16" viewBox="0 0 576 512" fill="#555" ><path d="M264.5 5.2c14.9-6.9 32.1-6.9 47 0l218.6 101c8.5 3.9 13.9 12.4 13.9 21.8s-5.4 17.9-13.9 21.8l-218.6 101c-14.9 6.9-32.1 6.9-47 0L45.9 149.8C37.4 145.8 32 137.3 32 128s5.4-17.9 13.9-21.8L264.5 5.2zM476.9 209.6l53.2 24.6c8.5 3.9 13.9 12.4 13.9 21.8s-5.4 17.9-13.9 21.8l-218.6 101c-14.9 6.9-32.1 6.9-47 0L45.9 277.8C37.4 273.8 32 265.3 32 256s5.4-17.9 13.9-21.8l53.2-24.6 152 70.2c23.4 10.8 50.4 10.8 73.8 0l152-70.2zm-152 198.2l152-70.2 53.2 24.6c8.5 3.9 13.9 12.4 13.9 21.8s-5.4 17.9-13.9 21.8l-218.6 101c-14.9 6.9-32.1 6.9-47 0L45.9 405.8C37.4 401.8 32 393.3 32 384s5.4-17.9 13.9-21.8l53.2-24.6 152 70.2c23.4 10.8 50.4 10.8 73.8 0z"></path></svg><span style="letter-spacing:0.296px">Decline in BHI (2000-2020)</span><svg class="abs" style="left:264px;top:12px" width="20.00" height="16" viewBox="0 0 640 512" fill="#212529" ><path d="M38.8 5.1C28.4-3.1 13.3-1.2 5.1 9.2S-1.2 34.7 9.2 42.9l592 464c10.4 8.2 25.5 6.3 33.7-4.1s6.3-25.5-4.1-33.7L525.6 386.7c39.6-40.6 66.4-86.1 79.9-118.4c3.3-7.9 3.3-16.7 0-24.6c-14.9-35.7-46.2-87.7-93-131.1C465.5 68.8 400.8 32 320 32c-68.2 0-125 26.3-169.3 60.8L38.8 5.1zM223.1 149.5C248.6 126.2 282.7 112 320 112c79.5 0 144 64.5 144 144c0 24.9-6.3 48.3-17.4 68.7L408 294.5c8.4-19.3 10.6-41.4 4.8-63.3c-11.1-41.5-47.8-69.4-88.6-71.1c-5.8-.2-9.2 6.1-7.4 11.7c2.1 6.4 3.3 13.2 3.3 20.3c0 10.2-2.4 19.8-6.6 28.3l-90.3-70.8zM373 389.9c-16.4 6.5-34.3 10.1-53 10.1c-79.5 0-144-64.5-144-144c0-6.9 .5-13.6 1.4-20.2L83.1 161.5C60.3 191.2 44 220.8 34.5 243.7c-3.3 7.9-3.3 16.7 0 24.6c14.9 35.7 46.2 87.7 93 131.1C174.5 443.2 239.2 480 320 480c47.8 0 89.9-12.9 126.2-32.5L373 389.9z"></path></svg></div>
<div id="sh"><span>Layer settings</span></div>
<div id="lname">OpenStreetMap</div>
<div id="oplabel">Opacity</div><div id="track"></div><div id="thumb"></div>
<div id="del">Delete layer</div>
</div>
</body>
</html>
